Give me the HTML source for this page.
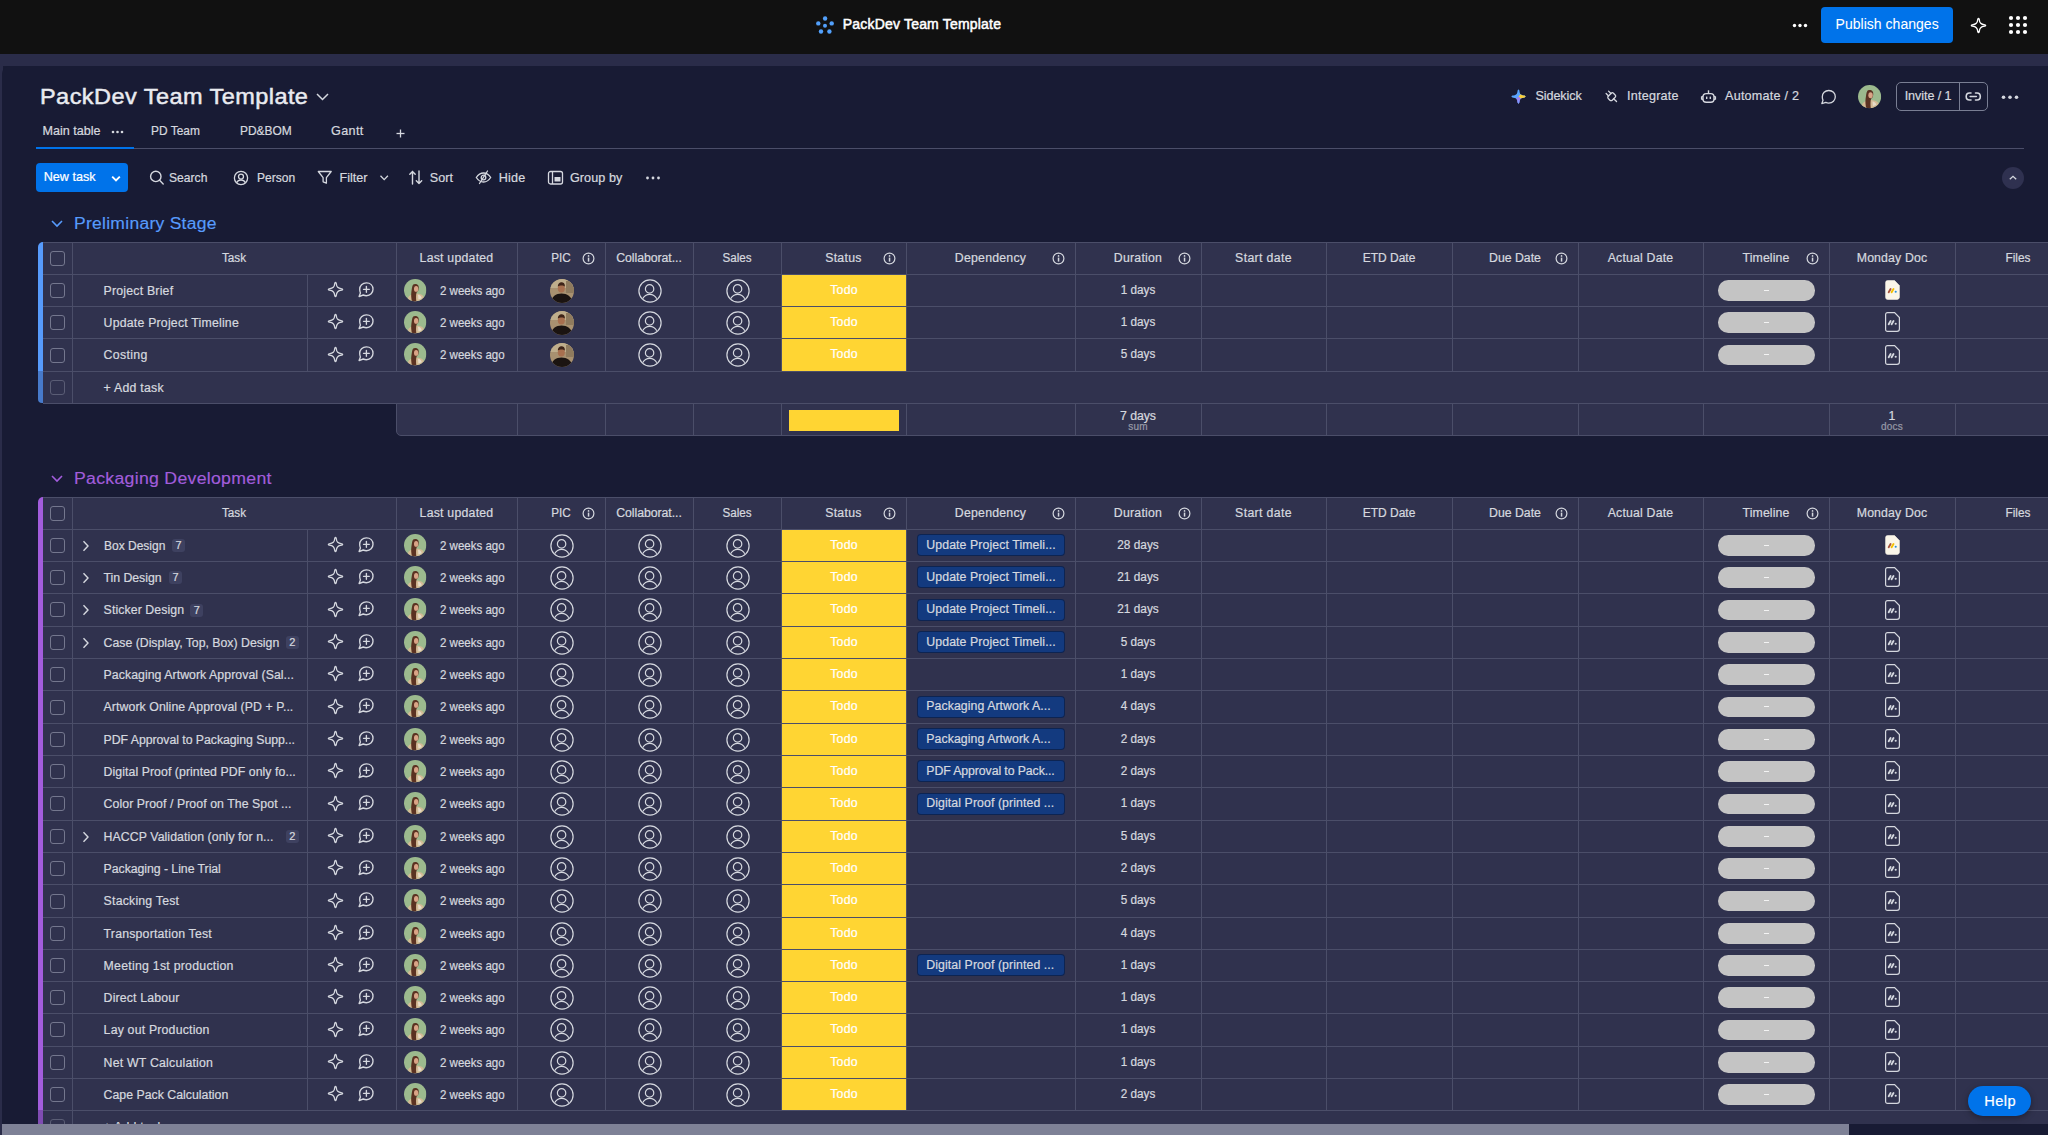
<!DOCTYPE html>
<html><head><meta charset="utf-8"><title>PackDev Team Template</title>
<style>
#root div{-webkit-text-stroke:0.22px currentColor;}
html,body{margin:0;padding:0;width:2048px;height:1135px;overflow:hidden;background:#181b34;font-family:"Liberation Sans", sans-serif;}
#root{position:relative;width:2048px;height:1135px;overflow:hidden;}
</style></head><body><div id="root">
<div style="position:absolute;left:0px;top:0px;width:2048px;height:54px;background:#111111;"></div>
<svg style="position:absolute;left:810px;top:10px;overflow:visible;" width="30" height="30" viewBox="0 0 30 30"><circle cx="15.100000000000023" cy="8.5" r="2.2" fill="#52a0fb"/><circle cx="8.299999999999955" cy="13.399999999999999" r="2.2" fill="#52a0fb"/><circle cx="21.700000000000045" cy="13.399999999999999" r="2.2" fill="#52a0fb"/><circle cx="15" cy="15.7" r="2.0" fill="#52a0fb"/><circle cx="11" cy="21.5" r="2.2" fill="#52a0fb"/><circle cx="19.399999999999977" cy="21.5" r="2.2" fill="#52a0fb"/></svg>
<div style="position:absolute;left:842.8px;top:17.25px;font-size:14px;line-height:14px;color:#ffffff;font-weight:400;letter-spacing:0.19px;white-space:nowrap;-webkit-text-stroke:0.5px #fff;">PackDev Team Template</div>
<svg style="position:absolute;left:1790px;top:20px;overflow:visible;" width="20" height="10" viewBox="0 0 20 10"><circle cx="4.5" cy="5.5" r="1.7" fill="#ffffff"/><circle cx="10" cy="5.5" r="1.7" fill="#ffffff"/><circle cx="15.5" cy="5.5" r="1.7" fill="#ffffff"/></svg>
<div style="position:absolute;left:1821px;top:7px;width:132px;height:36px;background:#0073ea;border-radius:4px;"></div>
<div style="position:absolute;left:1835.6px;top:17.15px;font-size:14px;line-height:14px;color:#ffffff;font-weight:400;letter-spacing:0.021px;white-space:nowrap;-webkit-text-stroke:0.05px #fff;">Publish changes</div>
<svg style="position:absolute;left:1969.5px;top:16.5px;overflow:visible;" width="17" height="17" viewBox="0 0 17 17"><path d="M6.30 6.30 C 7.30 5.40 7.65 3.70 7.80 2.20 Q 8.50 0.50 9.20 2.20 C 9.35 3.70 9.70 5.40 10.70 6.30 C 11.60 7.30 13.30 7.65 14.80 7.80 Q 16.50 8.50 14.80 9.20 C 13.30 9.35 11.60 9.70 10.70 10.70 C 9.70 11.60 9.35 13.30 9.20 14.80 Q 8.50 16.50 7.80 14.80 C 7.65 13.30 7.30 11.60 6.30 10.70 C 5.40 9.70 3.70 9.35 2.20 9.20 Q 0.50 8.50 2.20 7.80 C 3.70 7.65 5.40 7.30 6.30 6.30Z" fill="none" stroke="#fff" stroke-width="1.35" stroke-linejoin="round"/></svg>
<svg style="position:absolute;left:2007px;top:14px;overflow:visible;" width="22" height="22" viewBox="0 0 22 22"><circle cx="4" cy="4" r="2.1" fill="#fff"/><circle cx="4" cy="11" r="2.1" fill="#fff"/><circle cx="4" cy="18" r="2.1" fill="#fff"/><circle cx="11" cy="4" r="2.1" fill="#fff"/><circle cx="11" cy="11" r="2.1" fill="#fff"/><circle cx="11" cy="18" r="2.1" fill="#fff"/><circle cx="18" cy="4" r="2.1" fill="#fff"/><circle cx="18" cy="11" r="2.1" fill="#fff"/><circle cx="18" cy="18" r="2.1" fill="#fff"/></svg>
<div style="position:absolute;left:0px;top:54px;width:2048px;height:12px;background:#2a2c49;"></div>
<div style="position:absolute;left:0px;top:66px;width:3px;height:1069px;background:#2a2c49;"></div>
<div style="position:absolute;left:2px;top:66px;width:2046px;height:1069px;background:#181b34;border-top-left-radius:8px;"></div>
<div style="position:absolute;left:40px;top:85.72px;font-size:21.6px;line-height:21.6px;color:#e9ebf0;font-weight:400;letter-spacing:0.4px;white-space:nowrap;-webkit-text-stroke:0.45px #e9ebf0;transform:scaleX(1.0890);transform-origin:0 0;">PackDev Team Template</div>
<svg style="position:absolute;left:315px;top:92px;overflow:visible;" width="16" height="10" viewBox="0 0 16 10"><polyline points="2,2 7.5,7.5 13,2" fill="none" stroke="#d5d8df" stroke-width="1.5"/></svg>
<svg style="position:absolute;left:1510px;top:88.2px;overflow:visible;" width="17" height="17" viewBox="0 0 17 17"><defs><clipPath id="skc"><path d="M6.30 6.30 C 7.20 5.70 7.40 3.90 7.60 2.40 Q 8.50 0.50 9.40 2.40 C 9.60 3.90 9.80 5.70 10.70 6.30 C 11.30 7.20 13.10 7.40 14.60 7.60 Q 16.50 8.50 14.60 9.40 C 13.10 9.60 11.30 9.80 10.70 10.70 C 9.80 11.30 9.60 13.10 9.40 14.60 Q 8.50 16.50 7.60 14.60 C 7.40 13.10 7.20 11.30 6.30 10.70 C 5.70 9.80 3.90 9.60 2.40 9.40 Q 0.50 8.50 2.40 7.60 C 3.90 7.40 5.70 7.20 6.30 6.30Z"/></clipPath></defs><g clip-path="url(#skc)"><rect width="17" height="17" fill="#5aa5ff"/><path d="M8.5 8.5 L17 0 L17 17Z" fill="#f9cf3a"/><path d="M8.5 8.5 L17 17 L0 17Z" fill="#a878f2"/><path d="M8.5 8.5 L8.9 17 L7.2 17Z" fill="#6aa8ff"/></g></svg>
<div style="position:absolute;left:1535.4px;top:89.93px;font-size:12.6px;line-height:12.6px;color:#d5d8df;font-weight:400;letter-spacing:-0.071px;white-space:nowrap;">Sidekick</div>
<svg style="position:absolute;left:1604px;top:89px;overflow:visible;" width="15" height="15" viewBox="0 0 15 15"><g transform="rotate(-45 7.5 7.5)" fill="none" stroke="#d5d8df" stroke-width="1.3" stroke-linecap="round" stroke-linejoin="round"><rect x="3.8" y="5" width="7.4" height="5.6" rx="1.6"/><line x1="5.8" y1="5" x2="5.8" y2="1.6"/><line x1="9.2" y1="5" x2="9.2" y2="1.6"/><line x1="7.5" y1="10.6" x2="7.5" y2="14.6"/></g></svg>
<div style="position:absolute;left:1627px;top:89.93px;font-size:12.6px;line-height:12.6px;color:#d5d8df;font-weight:400;letter-spacing:0.225px;white-space:nowrap;">Integrate</div>
<svg style="position:absolute;left:1700px;top:89px;overflow:visible;" width="17" height="15" viewBox="0 0 17 15"><g fill="none" stroke="#d5d8df" stroke-width="1.4"><rect x="3" y="4.6" width="11" height="8.6" rx="3.2"/><line x1="8.5" y1="1.3" x2="8.5" y2="4.6"/><path d="M3 7.3 L1.6 7.9 L1.6 10 L3 10.6"/><path d="M14 7.3 L15.4 7.9 L15.4 10 L14 10.6"/></g><rect x="6" y="7.6" width="1.4" height="2.4" fill="#d5d8df"/><rect x="9.6" y="7.6" width="1.4" height="2.4" fill="#d5d8df"/></svg>
<div style="position:absolute;left:1725px;top:89.93px;font-size:12.6px;line-height:12.6px;color:#d5d8df;font-weight:400;letter-spacing:0.236px;white-space:nowrap;">Automate / 2</div>
<svg style="position:absolute;left:1820px;top:88.5px;overflow:visible;" width="17" height="16" viewBox="0 0 17 16"><path d="M8.8 1.5 C12.6 1.5 15.3 4.2 15.3 7.8 C15.3 11.4 12.6 14.1 8.8 14.1 C7.7 14.1 6.7 13.9 5.8 13.4 L1.8 14.6 L3 11.2 C2.5 10.2 2.3 9 2.3 7.8 C2.3 4.2 5 1.5 8.8 1.5Z" fill="none" stroke="#d5d8df" stroke-width="1.3" stroke-linejoin="round"/></svg>
<svg style="position:absolute;left:1857.9px;top:85.2px;overflow:visible;" width="23.2" height="23.2" viewBox="0 0 24 24"><defs><clipPath id="cw1"><circle cx="12" cy="12" r="12"/></clipPath></defs><g clip-path="url(#cw1)"><rect width="24" height="24" fill="#9cba8e"/><path d="M3 24 C3.5 19.5 6 17 9.5 16 C12 15.4 15.5 15.5 18.5 16.6 C21 17.6 22 20 22.5 24Z" fill="#d4bb95"/><path d="M15 17 C17 17 18.5 18.5 19 20.5 L15.5 22Z" fill="#e6dcc8"/><path d="M9.6 6.2 C10.6 4.9 13.8 4.8 15.2 6.8 C16.2 8.4 15.8 11 15.2 12.6 L13.6 14.2 C12.8 16.2 12.8 20.2 13.2 24 L8.4 24 C7.8 20.2 7.4 17 7.9 14 C8.4 11 8.5 8 9.6 6.2Z" fill="#5b3222"/><ellipse cx="13" cy="10.6" rx="2.3" ry="3.1" fill="#d9a486"/></g></svg>
<div style="position:absolute;left:1896px;top:82px;width:92px;height:29px;border:1px solid #797e93;border-radius:5px;box-sizing:border-box;"></div>
<div style="position:absolute;left:1959px;top:82px;width:1px;height:29px;background:#797e93;"></div>
<div style="position:absolute;left:1904.7px;top:89.63px;font-size:12.6px;line-height:12.6px;color:#d5d8df;font-weight:400;letter-spacing:-0.078px;white-space:nowrap;">Invite / 1</div>
<svg style="position:absolute;left:1965px;top:91px;overflow:visible;" width="17" height="12" viewBox="0 0 17 12"><g fill="none" stroke="#d5d8df" stroke-width="1.6" stroke-linecap="round"><path d="M6 2 L4.5 2 C2.5 2 1.2 3.6 1.2 5.5 C1.2 7.4 2.5 9 4.5 9 L6 9"/><path d="M10.5 2 L12 2 C14 2 15.3 3.6 15.3 5.5 C15.3 7.4 14 9 12 9 L10.5 9"/><line x1="5.2" y1="5.5" x2="11.3" y2="5.5"/></g></svg>
<svg style="position:absolute;left:2000px;top:92px;overflow:visible;" width="20" height="10" viewBox="0 0 20 10"><circle cx="3.5" cy="5.2" r="1.8" fill="#d5d8df"/><circle cx="10" cy="5.2" r="1.8" fill="#d5d8df"/><circle cx="16.5" cy="5.2" r="1.8" fill="#d5d8df"/></svg>
<div style="position:absolute;left:42.4px;top:125.03px;font-size:12.6px;line-height:12.6px;color:#d5d8df;font-weight:400;letter-spacing:0.0px;white-space:nowrap;">Main table</div>
<svg style="position:absolute;left:110px;top:128px;overflow:visible;" width="16" height="8" viewBox="0 0 16 8"><circle cx="3" cy="4" r="1.3" fill="#d5d8df"/><circle cx="7.5" cy="4" r="1.3" fill="#d5d8df"/><circle cx="12" cy="4" r="1.3" fill="#d5d8df"/></svg>
<div style="position:absolute;left:151px;top:125.03px;font-size:12.6px;line-height:12.6px;color:#d5d8df;font-weight:400;letter-spacing:0px;white-space:nowrap;transform:scaleX(0.9477);transform-origin:0 0;">PD Team</div>
<div style="position:absolute;left:239.5px;top:125.03px;font-size:12.6px;line-height:12.6px;color:#d5d8df;font-weight:400;letter-spacing:0px;white-space:nowrap;transform:scaleX(0.9487);transform-origin:0 0;">PD&amp;BOM</div>
<div style="position:absolute;left:331px;top:125.03px;font-size:12.6px;line-height:12.6px;color:#d5d8df;font-weight:400;letter-spacing:0.375px;white-space:nowrap;">Gantt</div>
<svg style="position:absolute;left:395px;top:128px;overflow:visible;" width="11" height="11" viewBox="0 0 11 11"><g stroke="#d5d8df" stroke-width="1.3"><line x1="5.5" y1="1.5" x2="5.5" y2="9.5"/><line x1="1.5" y1="5.5" x2="9.5" y2="5.5"/></g></svg>
<div style="position:absolute;left:36px;top:148px;width:1988px;height:1px;background:#4b4e69;"></div>
<div style="position:absolute;left:36px;top:147px;width:98px;height:2px;background:#0073ea;"></div>
<div style="position:absolute;left:36px;top:163px;width:91.5px;height:29px;background:#0073ea;border-radius:4px;"></div>
<div style="position:absolute;left:43.7px;top:170.73px;font-size:12.6px;line-height:12.6px;color:#ffffff;font-weight:400;letter-spacing:0.014px;white-space:nowrap;">New task</div>
<svg style="position:absolute;left:110px;top:173.6px;overflow:visible;" width="12" height="9" viewBox="0 0 12 9"><polyline points="2.2,2.6 6,6.4 9.8,2.6" fill="none" stroke="#fff" stroke-width="1.9"/></svg>
<svg style="position:absolute;left:149px;top:170px;overflow:visible;" width="16" height="15" viewBox="0 0 16 15"><g fill="none" stroke="#d5d8df" stroke-width="1.4" stroke-linecap="round"><circle cx="6.8" cy="6.4" r="5.2"/><line x1="10.6" y1="10.3" x2="14.2" y2="13.9"/></g></svg>
<div style="position:absolute;left:168.7px;top:171.73px;font-size:12.6px;line-height:12.6px;color:#d5d8df;font-weight:400;letter-spacing:0px;white-space:nowrap;transform:scaleX(0.9624);transform-origin:0 0;">Search</div>
<svg style="position:absolute;left:233px;top:170px;overflow:visible;" width="16" height="16" viewBox="0 0 16 16"><g fill="none" stroke="#d5d8df" stroke-width="1.3"><circle cx="8" cy="8" r="6.6"/><circle cx="8" cy="6.6" r="2.5"/><path d="M3.6 12.8 C4.6 10.8 6.2 10 8 10 C9.8 10 11.4 10.8 12.4 12.8"/></g></svg>
<div style="position:absolute;left:256.6px;top:171.73px;font-size:12.6px;line-height:12.6px;color:#d5d8df;font-weight:400;letter-spacing:0px;white-space:nowrap;transform:scaleX(0.9549);transform-origin:0 0;">Person</div>
<svg style="position:absolute;left:317px;top:170px;overflow:visible;" width="16" height="15" viewBox="0 0 16 15"><path d="M1.3 1.5 L14.2 1.5 L9.4 7.6 L9.4 13.2 L6.1 11.8 L6.1 7.6 Z" fill="none" stroke="#d5d8df" stroke-width="1.3" stroke-linejoin="round"/></svg>
<div style="position:absolute;left:339.5px;top:171.73px;font-size:12.6px;line-height:12.6px;color:#d5d8df;font-weight:400;letter-spacing:0.0px;white-space:nowrap;">Filter</div>
<svg style="position:absolute;left:379px;top:174px;overflow:visible;" width="11" height="8" viewBox="0 0 11 8"><polyline points="1.5,1.8 5.2,5.6 8.9,1.8" fill="none" stroke="#d5d8df" stroke-width="1.3"/></svg>
<svg style="position:absolute;left:409px;top:170px;overflow:visible;" width="14" height="15" viewBox="0 0 14 15"><g fill="none" stroke="#d5d8df" stroke-width="1.4" stroke-linecap="round" stroke-linejoin="round"><path d="M3.5 14 L3.5 1.5 M0.8 4.3 L3.5 1.5 L6.2 4.3"/><path d="M10 1 L10 13.5 M7.3 10.8 L10 13.5 L12.7 10.8"/></g></svg>
<div style="position:absolute;left:429.8px;top:171.73px;font-size:12.6px;line-height:12.6px;color:#d5d8df;font-weight:400;letter-spacing:0.033px;white-space:nowrap;">Sort</div>
<svg style="position:absolute;left:475px;top:170px;overflow:visible;" width="17" height="14" viewBox="0 0 17 14"><g fill="none" stroke="#d5d8df" stroke-width="1.3" stroke-linecap="round"><path d="M1.3 7.5 C3.2 4.6 5.8 3 8.5 3 C11.2 3 13.8 4.6 15.7 7.5 C13.8 10.4 11.2 12 8.5 12 C5.8 12 3.2 10.4 1.3 7.5Z"/><circle cx="8.5" cy="7.5" r="2.3"/><line x1="12.5" y1="1" x2="4.5" y2="13.5"/></g></svg>
<div style="position:absolute;left:498.8px;top:171.73px;font-size:12.6px;line-height:12.6px;color:#d5d8df;font-weight:400;letter-spacing:0.167px;white-space:nowrap;">Hide</div>
<svg style="position:absolute;left:547px;top:170px;overflow:visible;" width="17" height="15" viewBox="0 0 17 15"><g fill="none" stroke="#d5d8df" stroke-width="1.3"><rect x="1.5" y="1.5" width="14" height="12.5" rx="2"/><line x1="5.5" y1="1.5" x2="5.5" y2="14"/></g><rect x="7.5" y="7" width="6" height="4.5" fill="#d5d8df"/></svg>
<div style="position:absolute;left:569.9px;top:171.73px;font-size:12.6px;line-height:12.6px;color:#d5d8df;font-weight:400;letter-spacing:0.086px;white-space:nowrap;">Group by</div>
<svg style="position:absolute;left:644px;top:173px;overflow:visible;" width="18" height="10" viewBox="0 0 18 10"><circle cx="3.5" cy="5" r="1.4" fill="#d5d8df"/><circle cx="9" cy="5" r="1.4" fill="#d5d8df"/><circle cx="14.5" cy="5" r="1.4" fill="#d5d8df"/></svg>
<div style="position:absolute;left:2002px;top:167px;width:22px;height:22px;border-radius:50%;background:#2f3150;"></div>
<svg style="position:absolute;left:2007px;top:173.8px;overflow:visible;" width="12" height="8" viewBox="0 0 12 8"><polyline points="2.8,5.3 6,2.3 9.2,5.3" fill="none" stroke="#d5d8df" stroke-width="1.3"/></svg>
<svg style="position:absolute;left:50px;top:218.7px;overflow:visible;" width="14" height="9" viewBox="0 0 14 9"><polyline points="2,2 7,7 12,2" fill="none" stroke="#579bfc" stroke-width="1.6"/></svg>
<div style="position:absolute;left:74.3px;top:215.53px;font-size:15.8px;line-height:15.8px;color:#579bfc;font-weight:400;letter-spacing:0.25px;white-space:nowrap;-webkit-text-stroke:0.15px #579bfc;transform:scaleX(1.1072);transform-origin:0 0;">Preliminary Stage</div>
<div style="position:absolute;left:43px;top:242px;width:2005px;height:161px;background:#30324e;"></div>
<div style="position:absolute;left:38px;top:242px;width:5px;height:129px;background:#579bfc;border-top-left-radius:5px;"></div>
<div style="position:absolute;left:38px;top:371px;width:5px;height:32px;border-bottom-left-radius:4px;background:#579bfc;opacity:0.75;"></div>
<div style="position:absolute;left:43px;top:242px;width:2005px;height:1px;background:#4b4e69;"></div>
<div style="position:absolute;left:43px;top:274px;width:2005px;height:1px;background:#4b4e69;"></div>
<div style="position:absolute;left:43px;top:306px;width:2005px;height:1px;background:#4b4e69;"></div>
<div style="position:absolute;left:43px;top:338px;width:2005px;height:1px;background:#4b4e69;"></div>
<div style="position:absolute;left:43px;top:371px;width:2005px;height:1px;background:#4b4e69;"></div>
<div style="position:absolute;left:43px;top:403px;width:2005px;height:1px;background:#4b4e69;"></div>
<div style="position:absolute;left:72px;top:242px;width:1px;height:161px;background:#4b4e69;"></div>
<div style="position:absolute;left:396px;top:242px;width:1px;height:129px;background:#4b4e69;"></div>
<div style="position:absolute;left:517px;top:242px;width:1px;height:129px;background:#4b4e69;"></div>
<div style="position:absolute;left:605px;top:242px;width:1px;height:129px;background:#4b4e69;"></div>
<div style="position:absolute;left:693px;top:242px;width:1px;height:129px;background:#4b4e69;"></div>
<div style="position:absolute;left:781px;top:242px;width:1px;height:129px;background:#4b4e69;"></div>
<div style="position:absolute;left:906px;top:242px;width:1px;height:129px;background:#4b4e69;"></div>
<div style="position:absolute;left:1075px;top:242px;width:1px;height:129px;background:#4b4e69;"></div>
<div style="position:absolute;left:1201px;top:242px;width:1px;height:129px;background:#4b4e69;"></div>
<div style="position:absolute;left:1326px;top:242px;width:1px;height:129px;background:#4b4e69;"></div>
<div style="position:absolute;left:1452px;top:242px;width:1px;height:129px;background:#4b4e69;"></div>
<div style="position:absolute;left:1578px;top:242px;width:1px;height:129px;background:#4b4e69;"></div>
<div style="position:absolute;left:1703px;top:242px;width:1px;height:129px;background:#4b4e69;"></div>
<div style="position:absolute;left:1829px;top:242px;width:1px;height:129px;background:#4b4e69;"></div>
<div style="position:absolute;left:1955px;top:242px;width:1px;height:129px;background:#4b4e69;"></div>
<div style="position:absolute;left:307px;top:274px;width:1px;height:97px;background:#4b4e69;"></div>
<div style="position:absolute;left:50px;top:251px;width:15px;height:15px;border:1px solid #74778e;border-radius:3px;box-sizing:border-box;"></div>
<div style="position:absolute;left:72px;width:324px;top:251.59px;font-size:12.3px;line-height:12.3px;color:#d5d8df;font-weight:400;letter-spacing:0px;white-space:nowrap;text-align:center;transform:scaleX(0.9526);transform-origin:50% 0;">Task</div>
<div style="position:absolute;left:396px;width:121px;top:251.59px;font-size:12.3px;line-height:12.3px;color:#d5d8df;font-weight:400;letter-spacing:0.227px;white-space:nowrap;text-align:center;">Last updated</div>
<div style="position:absolute;left:517px;width:88px;top:251.59px;font-size:12.3px;line-height:12.3px;color:#d5d8df;font-weight:400;letter-spacing:0px;white-space:nowrap;text-align:center;transform:scaleX(0.9512);transform-origin:50% 0;">PIC</div>
<svg style="position:absolute;left:582.0px;top:251.8px;overflow:visible;" width="13" height="13" viewBox="0 0 13 13"><circle cx="6.5" cy="6.5" r="5.4" fill="none" stroke="#d5d8df" stroke-width="1.2"/><rect x="5.8" y="5.6" width="1.5" height="4" fill="#d5d8df"/><circle cx="6.55" cy="3.9" r="0.85" fill="#d5d8df"/></svg>
<div style="position:absolute;left:605px;width:88px;top:251.59px;font-size:12.3px;line-height:12.3px;color:#d5d8df;font-weight:400;letter-spacing:-0.05px;white-space:nowrap;text-align:center;">Collaborat...</div>
<div style="position:absolute;left:693px;width:88px;top:251.59px;font-size:12.3px;line-height:12.3px;color:#d5d8df;font-weight:400;letter-spacing:0px;white-space:nowrap;text-align:center;transform:scaleX(0.9481);transform-origin:50% 0;">Sales</div>
<div style="position:absolute;left:781px;width:125px;top:251.59px;font-size:12.3px;line-height:12.3px;color:#d5d8df;font-weight:400;letter-spacing:0.3px;white-space:nowrap;text-align:center;">Status</div>
<svg style="position:absolute;left:883.0px;top:251.8px;overflow:visible;" width="13" height="13" viewBox="0 0 13 13"><circle cx="6.5" cy="6.5" r="5.4" fill="none" stroke="#d5d8df" stroke-width="1.2"/><rect x="5.8" y="5.6" width="1.5" height="4" fill="#d5d8df"/><circle cx="6.55" cy="3.9" r="0.85" fill="#d5d8df"/></svg>
<div style="position:absolute;left:906px;width:169px;top:251.59px;font-size:12.3px;line-height:12.3px;color:#d5d8df;font-weight:400;letter-spacing:0.233px;white-space:nowrap;text-align:center;">Dependency</div>
<svg style="position:absolute;left:1052.0px;top:251.8px;overflow:visible;" width="13" height="13" viewBox="0 0 13 13"><circle cx="6.5" cy="6.5" r="5.4" fill="none" stroke="#d5d8df" stroke-width="1.2"/><rect x="5.8" y="5.6" width="1.5" height="4" fill="#d5d8df"/><circle cx="6.55" cy="3.9" r="0.85" fill="#d5d8df"/></svg>
<div style="position:absolute;left:1075px;width:126px;top:251.59px;font-size:12.3px;line-height:12.3px;color:#d5d8df;font-weight:400;letter-spacing:0.229px;white-space:nowrap;text-align:center;">Duration</div>
<svg style="position:absolute;left:1178.0px;top:251.8px;overflow:visible;" width="13" height="13" viewBox="0 0 13 13"><circle cx="6.5" cy="6.5" r="5.4" fill="none" stroke="#d5d8df" stroke-width="1.2"/><rect x="5.8" y="5.6" width="1.5" height="4" fill="#d5d8df"/><circle cx="6.55" cy="3.9" r="0.85" fill="#d5d8df"/></svg>
<div style="position:absolute;left:1201px;width:125px;top:251.59px;font-size:12.3px;line-height:12.3px;color:#d5d8df;font-weight:400;letter-spacing:0.344px;white-space:nowrap;text-align:center;">Start date</div>
<div style="position:absolute;left:1326px;width:126px;top:251.59px;font-size:12.3px;line-height:12.3px;color:#d5d8df;font-weight:400;letter-spacing:0px;white-space:nowrap;text-align:center;transform:scaleX(0.9759);transform-origin:50% 0;">ETD Date</div>
<div style="position:absolute;left:1452px;width:126px;top:251.59px;font-size:12.3px;line-height:12.3px;color:#d5d8df;font-weight:400;letter-spacing:-0.014px;white-space:nowrap;text-align:center;">Due Date</div>
<svg style="position:absolute;left:1555.0px;top:251.8px;overflow:visible;" width="13" height="13" viewBox="0 0 13 13"><circle cx="6.5" cy="6.5" r="5.4" fill="none" stroke="#d5d8df" stroke-width="1.2"/><rect x="5.8" y="5.6" width="1.5" height="4" fill="#d5d8df"/><circle cx="6.55" cy="3.9" r="0.85" fill="#d5d8df"/></svg>
<div style="position:absolute;left:1578px;width:125px;top:251.59px;font-size:12.3px;line-height:12.3px;color:#d5d8df;font-weight:400;letter-spacing:0.19px;white-space:nowrap;text-align:center;">Actual Date</div>
<div style="position:absolute;left:1703px;width:126px;top:251.59px;font-size:12.3px;line-height:12.3px;color:#d5d8df;font-weight:400;letter-spacing:0.1px;white-space:nowrap;text-align:center;">Timeline</div>
<svg style="position:absolute;left:1806.0px;top:251.8px;overflow:visible;" width="13" height="13" viewBox="0 0 13 13"><circle cx="6.5" cy="6.5" r="5.4" fill="none" stroke="#d5d8df" stroke-width="1.2"/><rect x="5.8" y="5.6" width="1.5" height="4" fill="#d5d8df"/><circle cx="6.55" cy="3.9" r="0.85" fill="#d5d8df"/></svg>
<div style="position:absolute;left:1829px;width:126px;top:251.59px;font-size:12.3px;line-height:12.3px;color:#d5d8df;font-weight:400;letter-spacing:0.144px;white-space:nowrap;text-align:center;">Monday Doc</div>
<div style="position:absolute;left:1955px;width:126px;top:251.59px;font-size:12.3px;line-height:12.3px;color:#d5d8df;font-weight:400;letter-spacing:0px;white-space:nowrap;text-align:center;transform:scaleX(0.9615);transform-origin:50% 0;">Files</div>
<div style="position:absolute;left:50px;top:283px;width:15px;height:15px;border:1px solid #74778e;border-radius:3px;box-sizing:border-box;"></div>
<div style="position:absolute;left:103.6px;top:285.39px;font-size:12.3px;line-height:12.3px;color:#d5d8df;font-weight:400;letter-spacing:0.208px;white-space:nowrap;">Project Brief</div>
<svg style="position:absolute;left:327.0px;top:281.1px;overflow:visible;" width="17" height="17" viewBox="0 0 17 17"><path d="M6.30 6.30 C 7.30 5.40 7.65 3.70 7.80 2.20 Q 8.50 0.50 9.20 2.20 C 9.35 3.70 9.70 5.40 10.70 6.30 C 11.60 7.30 13.30 7.65 14.80 7.80 Q 16.50 8.50 14.80 9.20 C 13.30 9.35 11.60 9.70 10.70 10.70 C 9.70 11.60 9.35 13.30 9.20 14.80 Q 8.50 16.50 7.80 14.80 C 7.65 13.30 7.30 11.60 6.30 10.70 C 5.40 9.70 3.70 9.35 2.20 9.20 Q 0.50 8.50 2.20 7.80 C 3.70 7.65 5.40 7.30 6.30 6.30Z" fill="none" stroke="#d5d8df" stroke-width="1.3" stroke-linejoin="round"/></svg>
<svg style="position:absolute;left:357.7px;top:281.9px;overflow:visible;" width="16" height="16" viewBox="0 0 16 16"><g fill="none" stroke="#d5d8df" stroke-width="1.35" stroke-linecap="round" stroke-linejoin="round"><path d="M8.4 0.9 C12.4 0.9 15 3.7 15 7.3 C15 10.9 12.3 13.7 8.4 13.7 C7.2 13.7 6.2 13.4 5.2 13 L1.1 14.6 L2.4 11 C1.9 9.9 1.7 8.6 1.7 7.3 C1.7 3.7 4.4 0.9 8.4 0.9Z"/><line x1="8.4" y1="4.4" x2="8.4" y2="10.2"/><line x1="5.5" y1="7.3" x2="11.3" y2="7.3"/></g></svg>
<svg style="position:absolute;left:403.8px;top:278.8px;overflow:visible;" width="22.4" height="22.4" viewBox="0 0 24 24"><defs><clipPath id="cw2"><circle cx="12" cy="12" r="12"/></clipPath></defs><g clip-path="url(#cw2)"><rect width="24" height="24" fill="#9cba8e"/><path d="M3 24 C3.5 19.5 6 17 9.5 16 C12 15.4 15.5 15.5 18.5 16.6 C21 17.6 22 20 22.5 24Z" fill="#d4bb95"/><path d="M15 17 C17 17 18.5 18.5 19 20.5 L15.5 22Z" fill="#e6dcc8"/><path d="M9.6 6.2 C10.6 4.9 13.8 4.8 15.2 6.8 C16.2 8.4 15.8 11 15.2 12.6 L13.6 14.2 C12.8 16.2 12.8 20.2 13.2 24 L8.4 24 C7.8 20.2 7.4 17 7.9 14 C8.4 11 8.5 8 9.6 6.2Z" fill="#5b3222"/><ellipse cx="13" cy="10.6" rx="2.3" ry="3.1" fill="#d9a486"/></g></svg>
<div style="position:absolute;left:440.3px;top:284.70px;font-size:12.4px;line-height:12.4px;color:#d5d8df;font-weight:400;letter-spacing:0px;white-space:nowrap;transform:scaleX(0.9296);transform-origin:0 0;">2 weeks ago</div>
<svg style="position:absolute;left:549.9px;top:278.5px;overflow:visible;" width="24" height="24" viewBox="0 0 24 24"><defs><clipPath id="cm3"><circle cx="12" cy="12" r="12"/></clipPath></defs><g clip-path="url(#cm3)"><rect width="24" height="24" fill="#a89170"/><rect x="0" y="0" width="24" height="9" fill="#bfae8c"/><rect x="16" y="2" width="8" height="12" fill="#8f7b5e"/><path d="M0.5 24 C1.5 17.5 6 14.5 11.5 14.5 C17 14.5 21.5 17.5 23.5 24Z" fill="#1b1411"/><ellipse cx="11.3" cy="9.2" rx="3.5" ry="4.4" fill="#a8704f"/><path d="M7.8 7.6 C8 4.2 9.8 3.2 11.6 3.2 C13.6 3.2 15 4.4 14.9 7.6 C13.8 6.2 9.8 6 7.8 7.6Z" fill="#3e2418"/></g></svg>
<svg style="position:absolute;left:637.7px;top:278.5px;overflow:visible;" width="24" height="24" viewBox="0 0 24 24"><g fill="none" stroke="#d5d8df" stroke-width="1.2"><circle cx="12" cy="12" r="11.1"/><circle cx="11.6" cy="9.9" r="4.2"/><path d="M4.6 19.7 C6.2 16.8 8.8 15.3 11.7 15.3 C14.6 15.3 17.2 16.8 18.8 19.7"/></g></svg>
<svg style="position:absolute;left:725.6px;top:278.5px;overflow:visible;" width="24" height="24" viewBox="0 0 24 24"><g fill="none" stroke="#d5d8df" stroke-width="1.2"><circle cx="12" cy="12" r="11.1"/><circle cx="11.6" cy="9.9" r="4.2"/><path d="M4.6 19.7 C6.2 16.8 8.8 15.3 11.7 15.3 C14.6 15.3 17.2 16.8 18.8 19.7"/></g></svg>
<div style="position:absolute;left:782px;top:275px;width:124px;height:31px;background:#ffd533;"></div>
<div style="position:absolute;left:782px;width:124px;top:284.19px;font-size:12.3px;line-height:12.3px;color:#ffffff;font-weight:400;letter-spacing:0.267px;white-space:nowrap;text-align:center;">Todo</div>
<div style="position:absolute;left:1075px;width:126px;top:284.19px;font-size:12.3px;line-height:12.3px;color:#d5d8df;font-weight:400;letter-spacing:0px;white-space:nowrap;text-align:center;transform:scaleX(0.9530);transform-origin:50% 0;">1 days</div>
<div style="position:absolute;left:1718.4px;top:280.3px;width:96.6px;height:20.5px;border-radius:10.25px;background:#c4c4c4;"></div>
<div style="position:absolute;left:1764px;top:290px;width:4.5px;height:1.2px;background:#f4f4f4;"></div>
<svg style="position:absolute;left:1884.7px;top:280.0px;overflow:visible;" width="15" height="20" viewBox="0 0 15 20"><path d="M2.6 0.6 L9.6 0.6 L14.4 5.6 L14.4 17 C14.4 18.5 13.5 19.4 12 19.4 L2.6 19.4 C1.3 19.4 0.6 18.6 0.6 17.2 L0.6 2.8 C0.6 1.4 1.3 0.6 2.6 0.6Z" fill="#fbf6e9" stroke="#fbf6e9" stroke-width="0.6"/><g stroke-width="1.9" stroke-linecap="round"><line x1="3.7" y1="12.2" x2="5.6" y2="9" stroke="#a8563f"/><line x1="6.6" y1="12.2" x2="8.5" y2="9" stroke="#f5c000"/></g><circle cx="10.7" cy="11.8" r="1.05" fill="#2a8fd8"/></svg>
<div style="position:absolute;left:50px;top:315px;width:15px;height:15px;border:1px solid #74778e;border-radius:3px;box-sizing:border-box;"></div>
<div style="position:absolute;left:103.6px;top:317.39px;font-size:12.3px;line-height:12.3px;color:#d5d8df;font-weight:400;letter-spacing:0.209px;white-space:nowrap;">Update Project Timeline</div>
<svg style="position:absolute;left:327.0px;top:313.1px;overflow:visible;" width="17" height="17" viewBox="0 0 17 17"><path d="M6.30 6.30 C 7.30 5.40 7.65 3.70 7.80 2.20 Q 8.50 0.50 9.20 2.20 C 9.35 3.70 9.70 5.40 10.70 6.30 C 11.60 7.30 13.30 7.65 14.80 7.80 Q 16.50 8.50 14.80 9.20 C 13.30 9.35 11.60 9.70 10.70 10.70 C 9.70 11.60 9.35 13.30 9.20 14.80 Q 8.50 16.50 7.80 14.80 C 7.65 13.30 7.30 11.60 6.30 10.70 C 5.40 9.70 3.70 9.35 2.20 9.20 Q 0.50 8.50 2.20 7.80 C 3.70 7.65 5.40 7.30 6.30 6.30Z" fill="none" stroke="#d5d8df" stroke-width="1.3" stroke-linejoin="round"/></svg>
<svg style="position:absolute;left:357.7px;top:313.9px;overflow:visible;" width="16" height="16" viewBox="0 0 16 16"><g fill="none" stroke="#d5d8df" stroke-width="1.35" stroke-linecap="round" stroke-linejoin="round"><path d="M8.4 0.9 C12.4 0.9 15 3.7 15 7.3 C15 10.9 12.3 13.7 8.4 13.7 C7.2 13.7 6.2 13.4 5.2 13 L1.1 14.6 L2.4 11 C1.9 9.9 1.7 8.6 1.7 7.3 C1.7 3.7 4.4 0.9 8.4 0.9Z"/><line x1="8.4" y1="4.4" x2="8.4" y2="10.2"/><line x1="5.5" y1="7.3" x2="11.3" y2="7.3"/></g></svg>
<svg style="position:absolute;left:403.8px;top:310.8px;overflow:visible;" width="22.4" height="22.4" viewBox="0 0 24 24"><defs><clipPath id="cw4"><circle cx="12" cy="12" r="12"/></clipPath></defs><g clip-path="url(#cw4)"><rect width="24" height="24" fill="#9cba8e"/><path d="M3 24 C3.5 19.5 6 17 9.5 16 C12 15.4 15.5 15.5 18.5 16.6 C21 17.6 22 20 22.5 24Z" fill="#d4bb95"/><path d="M15 17 C17 17 18.5 18.5 19 20.5 L15.5 22Z" fill="#e6dcc8"/><path d="M9.6 6.2 C10.6 4.9 13.8 4.8 15.2 6.8 C16.2 8.4 15.8 11 15.2 12.6 L13.6 14.2 C12.8 16.2 12.8 20.2 13.2 24 L8.4 24 C7.8 20.2 7.4 17 7.9 14 C8.4 11 8.5 8 9.6 6.2Z" fill="#5b3222"/><ellipse cx="13" cy="10.6" rx="2.3" ry="3.1" fill="#d9a486"/></g></svg>
<div style="position:absolute;left:440.3px;top:316.70px;font-size:12.4px;line-height:12.4px;color:#d5d8df;font-weight:400;letter-spacing:0px;white-space:nowrap;transform:scaleX(0.9296);transform-origin:0 0;">2 weeks ago</div>
<svg style="position:absolute;left:549.9px;top:310.5px;overflow:visible;" width="24" height="24" viewBox="0 0 24 24"><defs><clipPath id="cm5"><circle cx="12" cy="12" r="12"/></clipPath></defs><g clip-path="url(#cm5)"><rect width="24" height="24" fill="#a89170"/><rect x="0" y="0" width="24" height="9" fill="#bfae8c"/><rect x="16" y="2" width="8" height="12" fill="#8f7b5e"/><path d="M0.5 24 C1.5 17.5 6 14.5 11.5 14.5 C17 14.5 21.5 17.5 23.5 24Z" fill="#1b1411"/><ellipse cx="11.3" cy="9.2" rx="3.5" ry="4.4" fill="#a8704f"/><path d="M7.8 7.6 C8 4.2 9.8 3.2 11.6 3.2 C13.6 3.2 15 4.4 14.9 7.6 C13.8 6.2 9.8 6 7.8 7.6Z" fill="#3e2418"/></g></svg>
<svg style="position:absolute;left:637.7px;top:310.5px;overflow:visible;" width="24" height="24" viewBox="0 0 24 24"><g fill="none" stroke="#d5d8df" stroke-width="1.2"><circle cx="12" cy="12" r="11.1"/><circle cx="11.6" cy="9.9" r="4.2"/><path d="M4.6 19.7 C6.2 16.8 8.8 15.3 11.7 15.3 C14.6 15.3 17.2 16.8 18.8 19.7"/></g></svg>
<svg style="position:absolute;left:725.6px;top:310.5px;overflow:visible;" width="24" height="24" viewBox="0 0 24 24"><g fill="none" stroke="#d5d8df" stroke-width="1.2"><circle cx="12" cy="12" r="11.1"/><circle cx="11.6" cy="9.9" r="4.2"/><path d="M4.6 19.7 C6.2 16.8 8.8 15.3 11.7 15.3 C14.6 15.3 17.2 16.8 18.8 19.7"/></g></svg>
<div style="position:absolute;left:782px;top:307px;width:124px;height:31px;background:#ffd533;"></div>
<div style="position:absolute;left:782px;width:124px;top:316.19px;font-size:12.3px;line-height:12.3px;color:#ffffff;font-weight:400;letter-spacing:0.267px;white-space:nowrap;text-align:center;">Todo</div>
<div style="position:absolute;left:1075px;width:126px;top:316.19px;font-size:12.3px;line-height:12.3px;color:#d5d8df;font-weight:400;letter-spacing:0px;white-space:nowrap;text-align:center;transform:scaleX(0.9530);transform-origin:50% 0;">1 days</div>
<div style="position:absolute;left:1718.4px;top:312.3px;width:96.6px;height:20.5px;border-radius:10.25px;background:#c4c4c4;"></div>
<div style="position:absolute;left:1764px;top:322px;width:4.5px;height:1.2px;background:#f4f4f4;"></div>
<svg style="position:absolute;left:1884.7px;top:312.0px;overflow:visible;" width="15" height="20" viewBox="0 0 15 20"><path d="M2.6 0.6 L9.6 0.6 L14.4 5.6 L14.4 17 C14.4 18.5 13.5 19.4 12 19.4 L2.6 19.4 C1.3 19.4 0.6 18.6 0.6 17.2 L0.6 2.8 C0.6 1.4 1.3 0.6 2.6 0.6Z" fill="none" stroke="#d5d8df" stroke-width="1.2"/><g stroke="#d5d8df" stroke-width="1.9" stroke-linecap="round"><line x1="3.7" y1="12.2" x2="5.6" y2="9"/><line x1="6.6" y1="12.2" x2="8.5" y2="9"/></g><circle cx="10.7" cy="11.8" r="1.05" fill="#d5d8df"/></svg>
<div style="position:absolute;left:50px;top:348px;width:15px;height:15px;border:1px solid #74778e;border-radius:3px;box-sizing:border-box;"></div>
<div style="position:absolute;left:103.6px;top:349.39px;font-size:12.3px;line-height:12.3px;color:#d5d8df;font-weight:400;letter-spacing:0.333px;white-space:nowrap;">Costing</div>
<svg style="position:absolute;left:327.0px;top:345.6px;overflow:visible;" width="17" height="17" viewBox="0 0 17 17"><path d="M6.30 6.30 C 7.30 5.40 7.65 3.70 7.80 2.20 Q 8.50 0.50 9.20 2.20 C 9.35 3.70 9.70 5.40 10.70 6.30 C 11.60 7.30 13.30 7.65 14.80 7.80 Q 16.50 8.50 14.80 9.20 C 13.30 9.35 11.60 9.70 10.70 10.70 C 9.70 11.60 9.35 13.30 9.20 14.80 Q 8.50 16.50 7.80 14.80 C 7.65 13.30 7.30 11.60 6.30 10.70 C 5.40 9.70 3.70 9.35 2.20 9.20 Q 0.50 8.50 2.20 7.80 C 3.70 7.65 5.40 7.30 6.30 6.30Z" fill="none" stroke="#d5d8df" stroke-width="1.3" stroke-linejoin="round"/></svg>
<svg style="position:absolute;left:357.7px;top:346.4px;overflow:visible;" width="16" height="16" viewBox="0 0 16 16"><g fill="none" stroke="#d5d8df" stroke-width="1.35" stroke-linecap="round" stroke-linejoin="round"><path d="M8.4 0.9 C12.4 0.9 15 3.7 15 7.3 C15 10.9 12.3 13.7 8.4 13.7 C7.2 13.7 6.2 13.4 5.2 13 L1.1 14.6 L2.4 11 C1.9 9.9 1.7 8.6 1.7 7.3 C1.7 3.7 4.4 0.9 8.4 0.9Z"/><line x1="8.4" y1="4.4" x2="8.4" y2="10.2"/><line x1="5.5" y1="7.3" x2="11.3" y2="7.3"/></g></svg>
<svg style="position:absolute;left:403.8px;top:343.3px;overflow:visible;" width="22.4" height="22.4" viewBox="0 0 24 24"><defs><clipPath id="cw6"><circle cx="12" cy="12" r="12"/></clipPath></defs><g clip-path="url(#cw6)"><rect width="24" height="24" fill="#9cba8e"/><path d="M3 24 C3.5 19.5 6 17 9.5 16 C12 15.4 15.5 15.5 18.5 16.6 C21 17.6 22 20 22.5 24Z" fill="#d4bb95"/><path d="M15 17 C17 17 18.5 18.5 19 20.5 L15.5 22Z" fill="#e6dcc8"/><path d="M9.6 6.2 C10.6 4.9 13.8 4.8 15.2 6.8 C16.2 8.4 15.8 11 15.2 12.6 L13.6 14.2 C12.8 16.2 12.8 20.2 13.2 24 L8.4 24 C7.8 20.2 7.4 17 7.9 14 C8.4 11 8.5 8 9.6 6.2Z" fill="#5b3222"/><ellipse cx="13" cy="10.6" rx="2.3" ry="3.1" fill="#d9a486"/></g></svg>
<div style="position:absolute;left:440.3px;top:348.70px;font-size:12.4px;line-height:12.4px;color:#d5d8df;font-weight:400;letter-spacing:0px;white-space:nowrap;transform:scaleX(0.9296);transform-origin:0 0;">2 weeks ago</div>
<svg style="position:absolute;left:549.9px;top:343.0px;overflow:visible;" width="24" height="24" viewBox="0 0 24 24"><defs><clipPath id="cm7"><circle cx="12" cy="12" r="12"/></clipPath></defs><g clip-path="url(#cm7)"><rect width="24" height="24" fill="#a89170"/><rect x="0" y="0" width="24" height="9" fill="#bfae8c"/><rect x="16" y="2" width="8" height="12" fill="#8f7b5e"/><path d="M0.5 24 C1.5 17.5 6 14.5 11.5 14.5 C17 14.5 21.5 17.5 23.5 24Z" fill="#1b1411"/><ellipse cx="11.3" cy="9.2" rx="3.5" ry="4.4" fill="#a8704f"/><path d="M7.8 7.6 C8 4.2 9.8 3.2 11.6 3.2 C13.6 3.2 15 4.4 14.9 7.6 C13.8 6.2 9.8 6 7.8 7.6Z" fill="#3e2418"/></g></svg>
<svg style="position:absolute;left:637.7px;top:343.0px;overflow:visible;" width="24" height="24" viewBox="0 0 24 24"><g fill="none" stroke="#d5d8df" stroke-width="1.2"><circle cx="12" cy="12" r="11.1"/><circle cx="11.6" cy="9.9" r="4.2"/><path d="M4.6 19.7 C6.2 16.8 8.8 15.3 11.7 15.3 C14.6 15.3 17.2 16.8 18.8 19.7"/></g></svg>
<svg style="position:absolute;left:725.6px;top:343.0px;overflow:visible;" width="24" height="24" viewBox="0 0 24 24"><g fill="none" stroke="#d5d8df" stroke-width="1.2"><circle cx="12" cy="12" r="11.1"/><circle cx="11.6" cy="9.9" r="4.2"/><path d="M4.6 19.7 C6.2 16.8 8.8 15.3 11.7 15.3 C14.6 15.3 17.2 16.8 18.8 19.7"/></g></svg>
<div style="position:absolute;left:782px;top:339px;width:124px;height:32px;background:#ffd533;"></div>
<div style="position:absolute;left:782px;width:124px;top:348.19px;font-size:12.3px;line-height:12.3px;color:#ffffff;font-weight:400;letter-spacing:0.267px;white-space:nowrap;text-align:center;">Todo</div>
<div style="position:absolute;left:1075px;width:126px;top:348.19px;font-size:12.3px;line-height:12.3px;color:#d5d8df;font-weight:400;letter-spacing:0px;white-space:nowrap;text-align:center;transform:scaleX(0.9530);transform-origin:50% 0;">5 days</div>
<div style="position:absolute;left:1718.4px;top:344.8px;width:96.6px;height:20.5px;border-radius:10.25px;background:#c4c4c4;"></div>
<div style="position:absolute;left:1764px;top:354px;width:4.5px;height:1.2px;background:#f4f4f4;"></div>
<svg style="position:absolute;left:1884.7px;top:344.5px;overflow:visible;" width="15" height="20" viewBox="0 0 15 20"><path d="M2.6 0.6 L9.6 0.6 L14.4 5.6 L14.4 17 C14.4 18.5 13.5 19.4 12 19.4 L2.6 19.4 C1.3 19.4 0.6 18.6 0.6 17.2 L0.6 2.8 C0.6 1.4 1.3 0.6 2.6 0.6Z" fill="none" stroke="#d5d8df" stroke-width="1.2"/><g stroke="#d5d8df" stroke-width="1.9" stroke-linecap="round"><line x1="3.7" y1="12.2" x2="5.6" y2="9"/><line x1="6.6" y1="12.2" x2="8.5" y2="9"/></g><circle cx="10.7" cy="11.8" r="1.05" fill="#d5d8df"/></svg>
<div style="position:absolute;left:50px;top:380px;width:15px;height:15px;border:1px solid #5a5d75;border-radius:3px;box-sizing:border-box;"></div>
<div style="position:absolute;left:103.6px;top:381.59px;font-size:12.3px;line-height:12.3px;color:#d5d8df;font-weight:400;letter-spacing:0.244px;white-space:nowrap;">+ Add task</div>
<div style="position:absolute;left:396px;top:403px;width:1700px;height:33px;background:#30324e;border:1px solid #4b4e69;border-bottom-left-radius:5px;box-sizing:border-box;"></div>
<div style="position:absolute;left:517px;top:403px;width:1px;height:32px;background:#4b4e69;"></div>
<div style="position:absolute;left:605px;top:403px;width:1px;height:32px;background:#4b4e69;"></div>
<div style="position:absolute;left:693px;top:403px;width:1px;height:32px;background:#4b4e69;"></div>
<div style="position:absolute;left:781px;top:403px;width:1px;height:32px;background:#4b4e69;"></div>
<div style="position:absolute;left:906px;top:403px;width:1px;height:32px;background:#4b4e69;"></div>
<div style="position:absolute;left:1075px;top:403px;width:1px;height:32px;background:#4b4e69;"></div>
<div style="position:absolute;left:1201px;top:403px;width:1px;height:32px;background:#4b4e69;"></div>
<div style="position:absolute;left:1326px;top:403px;width:1px;height:32px;background:#4b4e69;"></div>
<div style="position:absolute;left:1452px;top:403px;width:1px;height:32px;background:#4b4e69;"></div>
<div style="position:absolute;left:1578px;top:403px;width:1px;height:32px;background:#4b4e69;"></div>
<div style="position:absolute;left:1703px;top:403px;width:1px;height:32px;background:#4b4e69;"></div>
<div style="position:absolute;left:1829px;top:403px;width:1px;height:32px;background:#4b4e69;"></div>
<div style="position:absolute;left:1955px;top:403px;width:1px;height:32px;background:#4b4e69;"></div>
<div style="position:absolute;left:789px;top:409.5px;width:110px;height:21px;background:#ffd533;"></div>
<div style="position:absolute;left:1075px;width:126px;top:409.99px;font-size:12.3px;line-height:12.3px;color:#d5d8df;font-weight:400;letter-spacing:-0.06px;white-space:nowrap;text-align:center;">7 days</div>
<div style="position:absolute;left:1075px;width:126px;top:422.14px;font-size:10px;line-height:10px;color:#9699a6;font-weight:400;letter-spacing:0.2px;white-space:nowrap;text-align:center;">sum</div>
<div style="position:absolute;left:1829px;width:126px;top:409.99px;font-size:12.3px;line-height:12.3px;color:#d5d8df;font-weight:400;letter-spacing:0px;white-space:nowrap;text-align:center;">1</div>
<div style="position:absolute;left:1829px;width:126px;top:422.14px;font-size:10px;line-height:10px;color:#9699a6;font-weight:400;letter-spacing:0.2px;white-space:nowrap;text-align:center;">docs</div>
<svg style="position:absolute;left:50px;top:473.7px;overflow:visible;" width="14" height="9" viewBox="0 0 14 9"><polyline points="2,2 7,7 12,2" fill="none" stroke="#a25ddc" stroke-width="1.6"/></svg>
<div style="position:absolute;left:74.3px;top:470.53px;font-size:15.8px;line-height:15.8px;color:#a25ddc;font-weight:400;letter-spacing:0.25px;white-space:nowrap;-webkit-text-stroke:0.15px #a25ddc;transform:scaleX(1.1202);transform-origin:0 0;">Packaging Development</div>
<div style="position:absolute;left:43px;top:497px;width:2005px;height:646px;background:#30324e;"></div>
<div style="position:absolute;left:38px;top:497px;width:5px;height:613px;background:#a25ddc;border-top-left-radius:5px;"></div>
<div style="position:absolute;left:38px;top:1110px;width:5px;height:33px;border-bottom-left-radius:4px;background:#a25ddc;opacity:0.75;"></div>
<div style="position:absolute;left:43px;top:497px;width:2005px;height:1px;background:#4b4e69;"></div>
<div style="position:absolute;left:43px;top:529px;width:2005px;height:1px;background:#4b4e69;"></div>
<div style="position:absolute;left:43px;top:561px;width:2005px;height:1px;background:#4b4e69;"></div>
<div style="position:absolute;left:43px;top:593px;width:2005px;height:1px;background:#4b4e69;"></div>
<div style="position:absolute;left:43px;top:626px;width:2005px;height:1px;background:#4b4e69;"></div>
<div style="position:absolute;left:43px;top:658px;width:2005px;height:1px;background:#4b4e69;"></div>
<div style="position:absolute;left:43px;top:690px;width:2005px;height:1px;background:#4b4e69;"></div>
<div style="position:absolute;left:43px;top:723px;width:2005px;height:1px;background:#4b4e69;"></div>
<div style="position:absolute;left:43px;top:755px;width:2005px;height:1px;background:#4b4e69;"></div>
<div style="position:absolute;left:43px;top:787px;width:2005px;height:1px;background:#4b4e69;"></div>
<div style="position:absolute;left:43px;top:820px;width:2005px;height:1px;background:#4b4e69;"></div>
<div style="position:absolute;left:43px;top:852px;width:2005px;height:1px;background:#4b4e69;"></div>
<div style="position:absolute;left:43px;top:884px;width:2005px;height:1px;background:#4b4e69;"></div>
<div style="position:absolute;left:43px;top:917px;width:2005px;height:1px;background:#4b4e69;"></div>
<div style="position:absolute;left:43px;top:949px;width:2005px;height:1px;background:#4b4e69;"></div>
<div style="position:absolute;left:43px;top:981px;width:2005px;height:1px;background:#4b4e69;"></div>
<div style="position:absolute;left:43px;top:1013px;width:2005px;height:1px;background:#4b4e69;"></div>
<div style="position:absolute;left:43px;top:1046px;width:2005px;height:1px;background:#4b4e69;"></div>
<div style="position:absolute;left:43px;top:1078px;width:2005px;height:1px;background:#4b4e69;"></div>
<div style="position:absolute;left:43px;top:1110px;width:2005px;height:1px;background:#4b4e69;"></div>
<div style="position:absolute;left:43px;top:1143px;width:2005px;height:1px;background:#4b4e69;"></div>
<div style="position:absolute;left:72px;top:497px;width:1px;height:646px;background:#4b4e69;"></div>
<div style="position:absolute;left:396px;top:497px;width:1px;height:613px;background:#4b4e69;"></div>
<div style="position:absolute;left:517px;top:497px;width:1px;height:613px;background:#4b4e69;"></div>
<div style="position:absolute;left:605px;top:497px;width:1px;height:613px;background:#4b4e69;"></div>
<div style="position:absolute;left:693px;top:497px;width:1px;height:613px;background:#4b4e69;"></div>
<div style="position:absolute;left:781px;top:497px;width:1px;height:613px;background:#4b4e69;"></div>
<div style="position:absolute;left:906px;top:497px;width:1px;height:613px;background:#4b4e69;"></div>
<div style="position:absolute;left:1075px;top:497px;width:1px;height:613px;background:#4b4e69;"></div>
<div style="position:absolute;left:1201px;top:497px;width:1px;height:613px;background:#4b4e69;"></div>
<div style="position:absolute;left:1326px;top:497px;width:1px;height:613px;background:#4b4e69;"></div>
<div style="position:absolute;left:1452px;top:497px;width:1px;height:613px;background:#4b4e69;"></div>
<div style="position:absolute;left:1578px;top:497px;width:1px;height:613px;background:#4b4e69;"></div>
<div style="position:absolute;left:1703px;top:497px;width:1px;height:613px;background:#4b4e69;"></div>
<div style="position:absolute;left:1829px;top:497px;width:1px;height:613px;background:#4b4e69;"></div>
<div style="position:absolute;left:1955px;top:497px;width:1px;height:613px;background:#4b4e69;"></div>
<div style="position:absolute;left:307px;top:529px;width:1px;height:581px;background:#4b4e69;"></div>
<div style="position:absolute;left:50px;top:506px;width:15px;height:15px;border:1px solid #74778e;border-radius:3px;box-sizing:border-box;"></div>
<div style="position:absolute;left:72px;width:324px;top:506.59px;font-size:12.3px;line-height:12.3px;color:#d5d8df;font-weight:400;letter-spacing:0px;white-space:nowrap;text-align:center;transform:scaleX(0.9526);transform-origin:50% 0;">Task</div>
<div style="position:absolute;left:396px;width:121px;top:506.59px;font-size:12.3px;line-height:12.3px;color:#d5d8df;font-weight:400;letter-spacing:0.227px;white-space:nowrap;text-align:center;">Last updated</div>
<div style="position:absolute;left:517px;width:88px;top:506.59px;font-size:12.3px;line-height:12.3px;color:#d5d8df;font-weight:400;letter-spacing:0px;white-space:nowrap;text-align:center;transform:scaleX(0.9512);transform-origin:50% 0;">PIC</div>
<svg style="position:absolute;left:582.0px;top:506.79999999999995px;overflow:visible;" width="13" height="13" viewBox="0 0 13 13"><circle cx="6.5" cy="6.5" r="5.4" fill="none" stroke="#d5d8df" stroke-width="1.2"/><rect x="5.8" y="5.6" width="1.5" height="4" fill="#d5d8df"/><circle cx="6.55" cy="3.9" r="0.85" fill="#d5d8df"/></svg>
<div style="position:absolute;left:605px;width:88px;top:506.59px;font-size:12.3px;line-height:12.3px;color:#d5d8df;font-weight:400;letter-spacing:-0.05px;white-space:nowrap;text-align:center;">Collaborat...</div>
<div style="position:absolute;left:693px;width:88px;top:506.59px;font-size:12.3px;line-height:12.3px;color:#d5d8df;font-weight:400;letter-spacing:0px;white-space:nowrap;text-align:center;transform:scaleX(0.9481);transform-origin:50% 0;">Sales</div>
<div style="position:absolute;left:781px;width:125px;top:506.59px;font-size:12.3px;line-height:12.3px;color:#d5d8df;font-weight:400;letter-spacing:0.3px;white-space:nowrap;text-align:center;">Status</div>
<svg style="position:absolute;left:883.0px;top:506.79999999999995px;overflow:visible;" width="13" height="13" viewBox="0 0 13 13"><circle cx="6.5" cy="6.5" r="5.4" fill="none" stroke="#d5d8df" stroke-width="1.2"/><rect x="5.8" y="5.6" width="1.5" height="4" fill="#d5d8df"/><circle cx="6.55" cy="3.9" r="0.85" fill="#d5d8df"/></svg>
<div style="position:absolute;left:906px;width:169px;top:506.59px;font-size:12.3px;line-height:12.3px;color:#d5d8df;font-weight:400;letter-spacing:0.233px;white-space:nowrap;text-align:center;">Dependency</div>
<svg style="position:absolute;left:1052.0px;top:506.79999999999995px;overflow:visible;" width="13" height="13" viewBox="0 0 13 13"><circle cx="6.5" cy="6.5" r="5.4" fill="none" stroke="#d5d8df" stroke-width="1.2"/><rect x="5.8" y="5.6" width="1.5" height="4" fill="#d5d8df"/><circle cx="6.55" cy="3.9" r="0.85" fill="#d5d8df"/></svg>
<div style="position:absolute;left:1075px;width:126px;top:506.59px;font-size:12.3px;line-height:12.3px;color:#d5d8df;font-weight:400;letter-spacing:0.229px;white-space:nowrap;text-align:center;">Duration</div>
<svg style="position:absolute;left:1178.0px;top:506.79999999999995px;overflow:visible;" width="13" height="13" viewBox="0 0 13 13"><circle cx="6.5" cy="6.5" r="5.4" fill="none" stroke="#d5d8df" stroke-width="1.2"/><rect x="5.8" y="5.6" width="1.5" height="4" fill="#d5d8df"/><circle cx="6.55" cy="3.9" r="0.85" fill="#d5d8df"/></svg>
<div style="position:absolute;left:1201px;width:125px;top:506.59px;font-size:12.3px;line-height:12.3px;color:#d5d8df;font-weight:400;letter-spacing:0.344px;white-space:nowrap;text-align:center;">Start date</div>
<div style="position:absolute;left:1326px;width:126px;top:506.59px;font-size:12.3px;line-height:12.3px;color:#d5d8df;font-weight:400;letter-spacing:0px;white-space:nowrap;text-align:center;transform:scaleX(0.9759);transform-origin:50% 0;">ETD Date</div>
<div style="position:absolute;left:1452px;width:126px;top:506.59px;font-size:12.3px;line-height:12.3px;color:#d5d8df;font-weight:400;letter-spacing:-0.014px;white-space:nowrap;text-align:center;">Due Date</div>
<svg style="position:absolute;left:1555.0px;top:506.79999999999995px;overflow:visible;" width="13" height="13" viewBox="0 0 13 13"><circle cx="6.5" cy="6.5" r="5.4" fill="none" stroke="#d5d8df" stroke-width="1.2"/><rect x="5.8" y="5.6" width="1.5" height="4" fill="#d5d8df"/><circle cx="6.55" cy="3.9" r="0.85" fill="#d5d8df"/></svg>
<div style="position:absolute;left:1578px;width:125px;top:506.59px;font-size:12.3px;line-height:12.3px;color:#d5d8df;font-weight:400;letter-spacing:0.19px;white-space:nowrap;text-align:center;">Actual Date</div>
<div style="position:absolute;left:1703px;width:126px;top:506.59px;font-size:12.3px;line-height:12.3px;color:#d5d8df;font-weight:400;letter-spacing:0.1px;white-space:nowrap;text-align:center;">Timeline</div>
<svg style="position:absolute;left:1806.0px;top:506.79999999999995px;overflow:visible;" width="13" height="13" viewBox="0 0 13 13"><circle cx="6.5" cy="6.5" r="5.4" fill="none" stroke="#d5d8df" stroke-width="1.2"/><rect x="5.8" y="5.6" width="1.5" height="4" fill="#d5d8df"/><circle cx="6.55" cy="3.9" r="0.85" fill="#d5d8df"/></svg>
<div style="position:absolute;left:1829px;width:126px;top:506.59px;font-size:12.3px;line-height:12.3px;color:#d5d8df;font-weight:400;letter-spacing:0.144px;white-space:nowrap;text-align:center;">Monday Doc</div>
<div style="position:absolute;left:1955px;width:126px;top:506.59px;font-size:12.3px;line-height:12.3px;color:#d5d8df;font-weight:400;letter-spacing:0px;white-space:nowrap;text-align:center;transform:scaleX(0.9615);transform-origin:50% 0;">Files</div>
<div style="position:absolute;left:50px;top:538px;width:15px;height:15px;border:1px solid #74778e;border-radius:3px;box-sizing:border-box;"></div>
<svg style="position:absolute;left:82px;top:539.8px;overflow:visible;" width="8" height="12" viewBox="0 0 8 12"><polyline points="1.5,1.2 6,6 1.5,10.8" fill="none" stroke="#d5d8df" stroke-width="1.4"/></svg>
<div style="position:absolute;left:103.6px;top:540.39px;font-size:12.3px;line-height:12.3px;color:#d5d8df;font-weight:400;letter-spacing:0px;white-space:nowrap;transform:scaleX(0.9762);transform-origin:0 0;">Box Design</div>
<div style="position:absolute;left:172.1px;top:539.1px;height:13px;width:13px;border-radius:3px;background:#3e4160;color:#d5d8df;font-size:11px;line-height:13px;text-align:center;">7</div>
<svg style="position:absolute;left:327.0px;top:536.1px;overflow:visible;" width="17" height="17" viewBox="0 0 17 17"><path d="M6.30 6.30 C 7.30 5.40 7.65 3.70 7.80 2.20 Q 8.50 0.50 9.20 2.20 C 9.35 3.70 9.70 5.40 10.70 6.30 C 11.60 7.30 13.30 7.65 14.80 7.80 Q 16.50 8.50 14.80 9.20 C 13.30 9.35 11.60 9.70 10.70 10.70 C 9.70 11.60 9.35 13.30 9.20 14.80 Q 8.50 16.50 7.80 14.80 C 7.65 13.30 7.30 11.60 6.30 10.70 C 5.40 9.70 3.70 9.35 2.20 9.20 Q 0.50 8.50 2.20 7.80 C 3.70 7.65 5.40 7.30 6.30 6.30Z" fill="none" stroke="#d5d8df" stroke-width="1.3" stroke-linejoin="round"/></svg>
<svg style="position:absolute;left:357.7px;top:536.9px;overflow:visible;" width="16" height="16" viewBox="0 0 16 16"><g fill="none" stroke="#d5d8df" stroke-width="1.35" stroke-linecap="round" stroke-linejoin="round"><path d="M8.4 0.9 C12.4 0.9 15 3.7 15 7.3 C15 10.9 12.3 13.7 8.4 13.7 C7.2 13.7 6.2 13.4 5.2 13 L1.1 14.6 L2.4 11 C1.9 9.9 1.7 8.6 1.7 7.3 C1.7 3.7 4.4 0.9 8.4 0.9Z"/><line x1="8.4" y1="4.4" x2="8.4" y2="10.2"/><line x1="5.5" y1="7.3" x2="11.3" y2="7.3"/></g></svg>
<svg style="position:absolute;left:403.8px;top:533.8px;overflow:visible;" width="22.4" height="22.4" viewBox="0 0 24 24"><defs><clipPath id="cw8"><circle cx="12" cy="12" r="12"/></clipPath></defs><g clip-path="url(#cw8)"><rect width="24" height="24" fill="#9cba8e"/><path d="M3 24 C3.5 19.5 6 17 9.5 16 C12 15.4 15.5 15.5 18.5 16.6 C21 17.6 22 20 22.5 24Z" fill="#d4bb95"/><path d="M15 17 C17 17 18.5 18.5 19 20.5 L15.5 22Z" fill="#e6dcc8"/><path d="M9.6 6.2 C10.6 4.9 13.8 4.8 15.2 6.8 C16.2 8.4 15.8 11 15.2 12.6 L13.6 14.2 C12.8 16.2 12.8 20.2 13.2 24 L8.4 24 C7.8 20.2 7.4 17 7.9 14 C8.4 11 8.5 8 9.6 6.2Z" fill="#5b3222"/><ellipse cx="13" cy="10.6" rx="2.3" ry="3.1" fill="#d9a486"/></g></svg>
<div style="position:absolute;left:440.3px;top:539.70px;font-size:12.4px;line-height:12.4px;color:#d5d8df;font-weight:400;letter-spacing:0px;white-space:nowrap;transform:scaleX(0.9296);transform-origin:0 0;">2 weeks ago</div>
<svg style="position:absolute;left:549.8px;top:533.5px;overflow:visible;" width="24" height="24" viewBox="0 0 24 24"><g fill="none" stroke="#d5d8df" stroke-width="1.2"><circle cx="12" cy="12" r="11.1"/><circle cx="11.6" cy="9.9" r="4.2"/><path d="M4.6 19.7 C6.2 16.8 8.8 15.3 11.7 15.3 C14.6 15.3 17.2 16.8 18.8 19.7"/></g></svg>
<svg style="position:absolute;left:637.7px;top:533.5px;overflow:visible;" width="24" height="24" viewBox="0 0 24 24"><g fill="none" stroke="#d5d8df" stroke-width="1.2"><circle cx="12" cy="12" r="11.1"/><circle cx="11.6" cy="9.9" r="4.2"/><path d="M4.6 19.7 C6.2 16.8 8.8 15.3 11.7 15.3 C14.6 15.3 17.2 16.8 18.8 19.7"/></g></svg>
<svg style="position:absolute;left:725.6px;top:533.5px;overflow:visible;" width="24" height="24" viewBox="0 0 24 24"><g fill="none" stroke="#d5d8df" stroke-width="1.2"><circle cx="12" cy="12" r="11.1"/><circle cx="11.6" cy="9.9" r="4.2"/><path d="M4.6 19.7 C6.2 16.8 8.8 15.3 11.7 15.3 C14.6 15.3 17.2 16.8 18.8 19.7"/></g></svg>
<div style="position:absolute;left:782px;top:530px;width:124px;height:31px;background:#ffd533;"></div>
<div style="position:absolute;left:782px;width:124px;top:539.19px;font-size:12.3px;line-height:12.3px;color:#ffffff;font-weight:400;letter-spacing:0.267px;white-space:nowrap;text-align:center;">Todo</div>
<div style="position:absolute;left:918.4px;top:535.1px;width:145.4px;height:20px;border-radius:3px;background:#133a7f;box-shadow:0 0 0 1px #0d2452;"></div>
<div style="position:absolute;left:926.3px;top:539.39px;font-size:12.3px;line-height:12.3px;color:#d5d8df;font-weight:400;letter-spacing:0.096px;white-space:nowrap;">Update Project Timeli...</div>
<div style="position:absolute;left:1075px;width:126px;top:539.19px;font-size:12.3px;line-height:12.3px;color:#d5d8df;font-weight:400;letter-spacing:0px;white-space:nowrap;text-align:center;transform:scaleX(0.9629);transform-origin:50% 0;">28 days</div>
<div style="position:absolute;left:1718.4px;top:535.3px;width:96.6px;height:20.5px;border-radius:10.25px;background:#c4c4c4;"></div>
<div style="position:absolute;left:1764px;top:545px;width:4.5px;height:1.2px;background:#f4f4f4;"></div>
<svg style="position:absolute;left:1884.7px;top:535.0px;overflow:visible;" width="15" height="20" viewBox="0 0 15 20"><path d="M2.6 0.6 L9.6 0.6 L14.4 5.6 L14.4 17 C14.4 18.5 13.5 19.4 12 19.4 L2.6 19.4 C1.3 19.4 0.6 18.6 0.6 17.2 L0.6 2.8 C0.6 1.4 1.3 0.6 2.6 0.6Z" fill="#fbf6e9" stroke="#fbf6e9" stroke-width="0.6"/><g stroke-width="1.9" stroke-linecap="round"><line x1="3.7" y1="12.2" x2="5.6" y2="9" stroke="#a8563f"/><line x1="6.6" y1="12.2" x2="8.5" y2="9" stroke="#f5c000"/></g><circle cx="10.7" cy="11.8" r="1.05" fill="#2a8fd8"/></svg>
<div style="position:absolute;left:50px;top:570px;width:15px;height:15px;border:1px solid #74778e;border-radius:3px;box-sizing:border-box;"></div>
<svg style="position:absolute;left:82px;top:571.8px;overflow:visible;" width="8" height="12" viewBox="0 0 8 12"><polyline points="1.5,1.2 6,6 1.5,10.8" fill="none" stroke="#d5d8df" stroke-width="1.4"/></svg>
<div style="position:absolute;left:103.6px;top:572.39px;font-size:12.3px;line-height:12.3px;color:#d5d8df;font-weight:400;letter-spacing:-0.044px;white-space:nowrap;">Tin Design</div>
<div style="position:absolute;left:169.0px;top:571.1px;height:13px;width:13px;border-radius:3px;background:#3e4160;color:#d5d8df;font-size:11px;line-height:13px;text-align:center;">7</div>
<svg style="position:absolute;left:327.0px;top:568.1px;overflow:visible;" width="17" height="17" viewBox="0 0 17 17"><path d="M6.30 6.30 C 7.30 5.40 7.65 3.70 7.80 2.20 Q 8.50 0.50 9.20 2.20 C 9.35 3.70 9.70 5.40 10.70 6.30 C 11.60 7.30 13.30 7.65 14.80 7.80 Q 16.50 8.50 14.80 9.20 C 13.30 9.35 11.60 9.70 10.70 10.70 C 9.70 11.60 9.35 13.30 9.20 14.80 Q 8.50 16.50 7.80 14.80 C 7.65 13.30 7.30 11.60 6.30 10.70 C 5.40 9.70 3.70 9.35 2.20 9.20 Q 0.50 8.50 2.20 7.80 C 3.70 7.65 5.40 7.30 6.30 6.30Z" fill="none" stroke="#d5d8df" stroke-width="1.3" stroke-linejoin="round"/></svg>
<svg style="position:absolute;left:357.7px;top:568.9px;overflow:visible;" width="16" height="16" viewBox="0 0 16 16"><g fill="none" stroke="#d5d8df" stroke-width="1.35" stroke-linecap="round" stroke-linejoin="round"><path d="M8.4 0.9 C12.4 0.9 15 3.7 15 7.3 C15 10.9 12.3 13.7 8.4 13.7 C7.2 13.7 6.2 13.4 5.2 13 L1.1 14.6 L2.4 11 C1.9 9.9 1.7 8.6 1.7 7.3 C1.7 3.7 4.4 0.9 8.4 0.9Z"/><line x1="8.4" y1="4.4" x2="8.4" y2="10.2"/><line x1="5.5" y1="7.3" x2="11.3" y2="7.3"/></g></svg>
<svg style="position:absolute;left:403.8px;top:565.8px;overflow:visible;" width="22.4" height="22.4" viewBox="0 0 24 24"><defs><clipPath id="cw9"><circle cx="12" cy="12" r="12"/></clipPath></defs><g clip-path="url(#cw9)"><rect width="24" height="24" fill="#9cba8e"/><path d="M3 24 C3.5 19.5 6 17 9.5 16 C12 15.4 15.5 15.5 18.5 16.6 C21 17.6 22 20 22.5 24Z" fill="#d4bb95"/><path d="M15 17 C17 17 18.5 18.5 19 20.5 L15.5 22Z" fill="#e6dcc8"/><path d="M9.6 6.2 C10.6 4.9 13.8 4.8 15.2 6.8 C16.2 8.4 15.8 11 15.2 12.6 L13.6 14.2 C12.8 16.2 12.8 20.2 13.2 24 L8.4 24 C7.8 20.2 7.4 17 7.9 14 C8.4 11 8.5 8 9.6 6.2Z" fill="#5b3222"/><ellipse cx="13" cy="10.6" rx="2.3" ry="3.1" fill="#d9a486"/></g></svg>
<div style="position:absolute;left:440.3px;top:571.70px;font-size:12.4px;line-height:12.4px;color:#d5d8df;font-weight:400;letter-spacing:0px;white-space:nowrap;transform:scaleX(0.9296);transform-origin:0 0;">2 weeks ago</div>
<svg style="position:absolute;left:549.8px;top:565.5px;overflow:visible;" width="24" height="24" viewBox="0 0 24 24"><g fill="none" stroke="#d5d8df" stroke-width="1.2"><circle cx="12" cy="12" r="11.1"/><circle cx="11.6" cy="9.9" r="4.2"/><path d="M4.6 19.7 C6.2 16.8 8.8 15.3 11.7 15.3 C14.6 15.3 17.2 16.8 18.8 19.7"/></g></svg>
<svg style="position:absolute;left:637.7px;top:565.5px;overflow:visible;" width="24" height="24" viewBox="0 0 24 24"><g fill="none" stroke="#d5d8df" stroke-width="1.2"><circle cx="12" cy="12" r="11.1"/><circle cx="11.6" cy="9.9" r="4.2"/><path d="M4.6 19.7 C6.2 16.8 8.8 15.3 11.7 15.3 C14.6 15.3 17.2 16.8 18.8 19.7"/></g></svg>
<svg style="position:absolute;left:725.6px;top:565.5px;overflow:visible;" width="24" height="24" viewBox="0 0 24 24"><g fill="none" stroke="#d5d8df" stroke-width="1.2"><circle cx="12" cy="12" r="11.1"/><circle cx="11.6" cy="9.9" r="4.2"/><path d="M4.6 19.7 C6.2 16.8 8.8 15.3 11.7 15.3 C14.6 15.3 17.2 16.8 18.8 19.7"/></g></svg>
<div style="position:absolute;left:782px;top:562px;width:124px;height:31px;background:#ffd533;"></div>
<div style="position:absolute;left:782px;width:124px;top:571.19px;font-size:12.3px;line-height:12.3px;color:#ffffff;font-weight:400;letter-spacing:0.267px;white-space:nowrap;text-align:center;">Todo</div>
<div style="position:absolute;left:918.4px;top:567.1px;width:145.4px;height:20px;border-radius:3px;background:#133a7f;box-shadow:0 0 0 1px #0d2452;"></div>
<div style="position:absolute;left:926.3px;top:571.39px;font-size:12.3px;line-height:12.3px;color:#d5d8df;font-weight:400;letter-spacing:0.096px;white-space:nowrap;">Update Project Timeli...</div>
<div style="position:absolute;left:1075px;width:126px;top:571.19px;font-size:12.3px;line-height:12.3px;color:#d5d8df;font-weight:400;letter-spacing:0px;white-space:nowrap;text-align:center;transform:scaleX(0.9629);transform-origin:50% 0;">21 days</div>
<div style="position:absolute;left:1718.4px;top:567.3px;width:96.6px;height:20.5px;border-radius:10.25px;background:#c4c4c4;"></div>
<div style="position:absolute;left:1764px;top:577px;width:4.5px;height:1.2px;background:#f4f4f4;"></div>
<svg style="position:absolute;left:1884.7px;top:567.0px;overflow:visible;" width="15" height="20" viewBox="0 0 15 20"><path d="M2.6 0.6 L9.6 0.6 L14.4 5.6 L14.4 17 C14.4 18.5 13.5 19.4 12 19.4 L2.6 19.4 C1.3 19.4 0.6 18.6 0.6 17.2 L0.6 2.8 C0.6 1.4 1.3 0.6 2.6 0.6Z" fill="none" stroke="#d5d8df" stroke-width="1.2"/><g stroke="#d5d8df" stroke-width="1.9" stroke-linecap="round"><line x1="3.7" y1="12.2" x2="5.6" y2="9"/><line x1="6.6" y1="12.2" x2="8.5" y2="9"/></g><circle cx="10.7" cy="11.8" r="1.05" fill="#d5d8df"/></svg>
<div style="position:absolute;left:50px;top:602px;width:15px;height:15px;border:1px solid #74778e;border-radius:3px;box-sizing:border-box;"></div>
<svg style="position:absolute;left:82px;top:604.3px;overflow:visible;" width="8" height="12" viewBox="0 0 8 12"><polyline points="1.5,1.2 6,6 1.5,10.8" fill="none" stroke="#d5d8df" stroke-width="1.4"/></svg>
<div style="position:absolute;left:103.6px;top:604.39px;font-size:12.3px;line-height:12.3px;color:#d5d8df;font-weight:400;letter-spacing:0.092px;white-space:nowrap;">Sticker Design</div>
<div style="position:absolute;left:190.3px;top:603.6px;height:13px;width:13px;border-radius:3px;background:#3e4160;color:#d5d8df;font-size:11px;line-height:13px;text-align:center;">7</div>
<svg style="position:absolute;left:327.0px;top:600.6px;overflow:visible;" width="17" height="17" viewBox="0 0 17 17"><path d="M6.30 6.30 C 7.30 5.40 7.65 3.70 7.80 2.20 Q 8.50 0.50 9.20 2.20 C 9.35 3.70 9.70 5.40 10.70 6.30 C 11.60 7.30 13.30 7.65 14.80 7.80 Q 16.50 8.50 14.80 9.20 C 13.30 9.35 11.60 9.70 10.70 10.70 C 9.70 11.60 9.35 13.30 9.20 14.80 Q 8.50 16.50 7.80 14.80 C 7.65 13.30 7.30 11.60 6.30 10.70 C 5.40 9.70 3.70 9.35 2.20 9.20 Q 0.50 8.50 2.20 7.80 C 3.70 7.65 5.40 7.30 6.30 6.30Z" fill="none" stroke="#d5d8df" stroke-width="1.3" stroke-linejoin="round"/></svg>
<svg style="position:absolute;left:357.7px;top:601.4px;overflow:visible;" width="16" height="16" viewBox="0 0 16 16"><g fill="none" stroke="#d5d8df" stroke-width="1.35" stroke-linecap="round" stroke-linejoin="round"><path d="M8.4 0.9 C12.4 0.9 15 3.7 15 7.3 C15 10.9 12.3 13.7 8.4 13.7 C7.2 13.7 6.2 13.4 5.2 13 L1.1 14.6 L2.4 11 C1.9 9.9 1.7 8.6 1.7 7.3 C1.7 3.7 4.4 0.9 8.4 0.9Z"/><line x1="8.4" y1="4.4" x2="8.4" y2="10.2"/><line x1="5.5" y1="7.3" x2="11.3" y2="7.3"/></g></svg>
<svg style="position:absolute;left:403.8px;top:598.3px;overflow:visible;" width="22.4" height="22.4" viewBox="0 0 24 24"><defs><clipPath id="cw10"><circle cx="12" cy="12" r="12"/></clipPath></defs><g clip-path="url(#cw10)"><rect width="24" height="24" fill="#9cba8e"/><path d="M3 24 C3.5 19.5 6 17 9.5 16 C12 15.4 15.5 15.5 18.5 16.6 C21 17.6 22 20 22.5 24Z" fill="#d4bb95"/><path d="M15 17 C17 17 18.5 18.5 19 20.5 L15.5 22Z" fill="#e6dcc8"/><path d="M9.6 6.2 C10.6 4.9 13.8 4.8 15.2 6.8 C16.2 8.4 15.8 11 15.2 12.6 L13.6 14.2 C12.8 16.2 12.8 20.2 13.2 24 L8.4 24 C7.8 20.2 7.4 17 7.9 14 C8.4 11 8.5 8 9.6 6.2Z" fill="#5b3222"/><ellipse cx="13" cy="10.6" rx="2.3" ry="3.1" fill="#d9a486"/></g></svg>
<div style="position:absolute;left:440.3px;top:603.70px;font-size:12.4px;line-height:12.4px;color:#d5d8df;font-weight:400;letter-spacing:0px;white-space:nowrap;transform:scaleX(0.9296);transform-origin:0 0;">2 weeks ago</div>
<svg style="position:absolute;left:549.8px;top:598.0px;overflow:visible;" width="24" height="24" viewBox="0 0 24 24"><g fill="none" stroke="#d5d8df" stroke-width="1.2"><circle cx="12" cy="12" r="11.1"/><circle cx="11.6" cy="9.9" r="4.2"/><path d="M4.6 19.7 C6.2 16.8 8.8 15.3 11.7 15.3 C14.6 15.3 17.2 16.8 18.8 19.7"/></g></svg>
<svg style="position:absolute;left:637.7px;top:598.0px;overflow:visible;" width="24" height="24" viewBox="0 0 24 24"><g fill="none" stroke="#d5d8df" stroke-width="1.2"><circle cx="12" cy="12" r="11.1"/><circle cx="11.6" cy="9.9" r="4.2"/><path d="M4.6 19.7 C6.2 16.8 8.8 15.3 11.7 15.3 C14.6 15.3 17.2 16.8 18.8 19.7"/></g></svg>
<svg style="position:absolute;left:725.6px;top:598.0px;overflow:visible;" width="24" height="24" viewBox="0 0 24 24"><g fill="none" stroke="#d5d8df" stroke-width="1.2"><circle cx="12" cy="12" r="11.1"/><circle cx="11.6" cy="9.9" r="4.2"/><path d="M4.6 19.7 C6.2 16.8 8.8 15.3 11.7 15.3 C14.6 15.3 17.2 16.8 18.8 19.7"/></g></svg>
<div style="position:absolute;left:782px;top:594px;width:124px;height:32px;background:#ffd533;"></div>
<div style="position:absolute;left:782px;width:124px;top:603.19px;font-size:12.3px;line-height:12.3px;color:#ffffff;font-weight:400;letter-spacing:0.267px;white-space:nowrap;text-align:center;">Todo</div>
<div style="position:absolute;left:918.4px;top:599.6px;width:145.4px;height:20px;border-radius:3px;background:#133a7f;box-shadow:0 0 0 1px #0d2452;"></div>
<div style="position:absolute;left:926.3px;top:603.39px;font-size:12.3px;line-height:12.3px;color:#d5d8df;font-weight:400;letter-spacing:0.096px;white-space:nowrap;">Update Project Timeli...</div>
<div style="position:absolute;left:1075px;width:126px;top:603.19px;font-size:12.3px;line-height:12.3px;color:#d5d8df;font-weight:400;letter-spacing:0px;white-space:nowrap;text-align:center;transform:scaleX(0.9629);transform-origin:50% 0;">21 days</div>
<div style="position:absolute;left:1718.4px;top:599.8px;width:96.6px;height:20.5px;border-radius:10.25px;background:#c4c4c4;"></div>
<div style="position:absolute;left:1764px;top:610px;width:4.5px;height:1.2px;background:#f4f4f4;"></div>
<svg style="position:absolute;left:1884.7px;top:599.5px;overflow:visible;" width="15" height="20" viewBox="0 0 15 20"><path d="M2.6 0.6 L9.6 0.6 L14.4 5.6 L14.4 17 C14.4 18.5 13.5 19.4 12 19.4 L2.6 19.4 C1.3 19.4 0.6 18.6 0.6 17.2 L0.6 2.8 C0.6 1.4 1.3 0.6 2.6 0.6Z" fill="none" stroke="#d5d8df" stroke-width="1.2"/><g stroke="#d5d8df" stroke-width="1.9" stroke-linecap="round"><line x1="3.7" y1="12.2" x2="5.6" y2="9"/><line x1="6.6" y1="12.2" x2="8.5" y2="9"/></g><circle cx="10.7" cy="11.8" r="1.05" fill="#d5d8df"/></svg>
<div style="position:absolute;left:50px;top:635px;width:15px;height:15px;border:1px solid #74778e;border-radius:3px;box-sizing:border-box;"></div>
<svg style="position:absolute;left:82px;top:636.8px;overflow:visible;" width="8" height="12" viewBox="0 0 8 12"><polyline points="1.5,1.2 6,6 1.5,10.8" fill="none" stroke="#d5d8df" stroke-width="1.4"/></svg>
<div style="position:absolute;left:103.6px;top:637.39px;font-size:12.3px;line-height:12.3px;color:#d5d8df;font-weight:400;letter-spacing:-0.007px;white-space:nowrap;">Case (Display, Top, Box) Design</div>
<div style="position:absolute;left:285.7px;top:636.1px;height:13px;width:13px;border-radius:3px;background:#3e4160;color:#d5d8df;font-size:11px;line-height:13px;text-align:center;">2</div>
<svg style="position:absolute;left:327.0px;top:633.1px;overflow:visible;" width="17" height="17" viewBox="0 0 17 17"><path d="M6.30 6.30 C 7.30 5.40 7.65 3.70 7.80 2.20 Q 8.50 0.50 9.20 2.20 C 9.35 3.70 9.70 5.40 10.70 6.30 C 11.60 7.30 13.30 7.65 14.80 7.80 Q 16.50 8.50 14.80 9.20 C 13.30 9.35 11.60 9.70 10.70 10.70 C 9.70 11.60 9.35 13.30 9.20 14.80 Q 8.50 16.50 7.80 14.80 C 7.65 13.30 7.30 11.60 6.30 10.70 C 5.40 9.70 3.70 9.35 2.20 9.20 Q 0.50 8.50 2.20 7.80 C 3.70 7.65 5.40 7.30 6.30 6.30Z" fill="none" stroke="#d5d8df" stroke-width="1.3" stroke-linejoin="round"/></svg>
<svg style="position:absolute;left:357.7px;top:633.9px;overflow:visible;" width="16" height="16" viewBox="0 0 16 16"><g fill="none" stroke="#d5d8df" stroke-width="1.35" stroke-linecap="round" stroke-linejoin="round"><path d="M8.4 0.9 C12.4 0.9 15 3.7 15 7.3 C15 10.9 12.3 13.7 8.4 13.7 C7.2 13.7 6.2 13.4 5.2 13 L1.1 14.6 L2.4 11 C1.9 9.9 1.7 8.6 1.7 7.3 C1.7 3.7 4.4 0.9 8.4 0.9Z"/><line x1="8.4" y1="4.4" x2="8.4" y2="10.2"/><line x1="5.5" y1="7.3" x2="11.3" y2="7.3"/></g></svg>
<svg style="position:absolute;left:403.8px;top:630.8px;overflow:visible;" width="22.4" height="22.4" viewBox="0 0 24 24"><defs><clipPath id="cw11"><circle cx="12" cy="12" r="12"/></clipPath></defs><g clip-path="url(#cw11)"><rect width="24" height="24" fill="#9cba8e"/><path d="M3 24 C3.5 19.5 6 17 9.5 16 C12 15.4 15.5 15.5 18.5 16.6 C21 17.6 22 20 22.5 24Z" fill="#d4bb95"/><path d="M15 17 C17 17 18.5 18.5 19 20.5 L15.5 22Z" fill="#e6dcc8"/><path d="M9.6 6.2 C10.6 4.9 13.8 4.8 15.2 6.8 C16.2 8.4 15.8 11 15.2 12.6 L13.6 14.2 C12.8 16.2 12.8 20.2 13.2 24 L8.4 24 C7.8 20.2 7.4 17 7.9 14 C8.4 11 8.5 8 9.6 6.2Z" fill="#5b3222"/><ellipse cx="13" cy="10.6" rx="2.3" ry="3.1" fill="#d9a486"/></g></svg>
<div style="position:absolute;left:440.3px;top:636.70px;font-size:12.4px;line-height:12.4px;color:#d5d8df;font-weight:400;letter-spacing:0px;white-space:nowrap;transform:scaleX(0.9296);transform-origin:0 0;">2 weeks ago</div>
<svg style="position:absolute;left:549.8px;top:630.5px;overflow:visible;" width="24" height="24" viewBox="0 0 24 24"><g fill="none" stroke="#d5d8df" stroke-width="1.2"><circle cx="12" cy="12" r="11.1"/><circle cx="11.6" cy="9.9" r="4.2"/><path d="M4.6 19.7 C6.2 16.8 8.8 15.3 11.7 15.3 C14.6 15.3 17.2 16.8 18.8 19.7"/></g></svg>
<svg style="position:absolute;left:637.7px;top:630.5px;overflow:visible;" width="24" height="24" viewBox="0 0 24 24"><g fill="none" stroke="#d5d8df" stroke-width="1.2"><circle cx="12" cy="12" r="11.1"/><circle cx="11.6" cy="9.9" r="4.2"/><path d="M4.6 19.7 C6.2 16.8 8.8 15.3 11.7 15.3 C14.6 15.3 17.2 16.8 18.8 19.7"/></g></svg>
<svg style="position:absolute;left:725.6px;top:630.5px;overflow:visible;" width="24" height="24" viewBox="0 0 24 24"><g fill="none" stroke="#d5d8df" stroke-width="1.2"><circle cx="12" cy="12" r="11.1"/><circle cx="11.6" cy="9.9" r="4.2"/><path d="M4.6 19.7 C6.2 16.8 8.8 15.3 11.7 15.3 C14.6 15.3 17.2 16.8 18.8 19.7"/></g></svg>
<div style="position:absolute;left:782px;top:627px;width:124px;height:31px;background:#ffd533;"></div>
<div style="position:absolute;left:782px;width:124px;top:636.19px;font-size:12.3px;line-height:12.3px;color:#ffffff;font-weight:400;letter-spacing:0.267px;white-space:nowrap;text-align:center;">Todo</div>
<div style="position:absolute;left:918.4px;top:632.1px;width:145.4px;height:20px;border-radius:3px;background:#133a7f;box-shadow:0 0 0 1px #0d2452;"></div>
<div style="position:absolute;left:926.3px;top:636.39px;font-size:12.3px;line-height:12.3px;color:#d5d8df;font-weight:400;letter-spacing:0.096px;white-space:nowrap;">Update Project Timeli...</div>
<div style="position:absolute;left:1075px;width:126px;top:636.19px;font-size:12.3px;line-height:12.3px;color:#d5d8df;font-weight:400;letter-spacing:0px;white-space:nowrap;text-align:center;transform:scaleX(0.9530);transform-origin:50% 0;">5 days</div>
<div style="position:absolute;left:1718.4px;top:632.3px;width:96.6px;height:20.5px;border-radius:10.25px;background:#c4c4c4;"></div>
<div style="position:absolute;left:1764px;top:642px;width:4.5px;height:1.2px;background:#f4f4f4;"></div>
<svg style="position:absolute;left:1884.7px;top:632.0px;overflow:visible;" width="15" height="20" viewBox="0 0 15 20"><path d="M2.6 0.6 L9.6 0.6 L14.4 5.6 L14.4 17 C14.4 18.5 13.5 19.4 12 19.4 L2.6 19.4 C1.3 19.4 0.6 18.6 0.6 17.2 L0.6 2.8 C0.6 1.4 1.3 0.6 2.6 0.6Z" fill="none" stroke="#d5d8df" stroke-width="1.2"/><g stroke="#d5d8df" stroke-width="1.9" stroke-linecap="round"><line x1="3.7" y1="12.2" x2="5.6" y2="9"/><line x1="6.6" y1="12.2" x2="8.5" y2="9"/></g><circle cx="10.7" cy="11.8" r="1.05" fill="#d5d8df"/></svg>
<div style="position:absolute;left:50px;top:667px;width:15px;height:15px;border:1px solid #74778e;border-radius:3px;box-sizing:border-box;"></div>
<div style="position:absolute;left:103.6px;top:669.39px;font-size:12.3px;line-height:12.3px;color:#d5d8df;font-weight:400;letter-spacing:0.052px;white-space:nowrap;">Packaging Artwork Approval (Sal...</div>
<svg style="position:absolute;left:327.0px;top:665.1px;overflow:visible;" width="17" height="17" viewBox="0 0 17 17"><path d="M6.30 6.30 C 7.30 5.40 7.65 3.70 7.80 2.20 Q 8.50 0.50 9.20 2.20 C 9.35 3.70 9.70 5.40 10.70 6.30 C 11.60 7.30 13.30 7.65 14.80 7.80 Q 16.50 8.50 14.80 9.20 C 13.30 9.35 11.60 9.70 10.70 10.70 C 9.70 11.60 9.35 13.30 9.20 14.80 Q 8.50 16.50 7.80 14.80 C 7.65 13.30 7.30 11.60 6.30 10.70 C 5.40 9.70 3.70 9.35 2.20 9.20 Q 0.50 8.50 2.20 7.80 C 3.70 7.65 5.40 7.30 6.30 6.30Z" fill="none" stroke="#d5d8df" stroke-width="1.3" stroke-linejoin="round"/></svg>
<svg style="position:absolute;left:357.7px;top:665.9px;overflow:visible;" width="16" height="16" viewBox="0 0 16 16"><g fill="none" stroke="#d5d8df" stroke-width="1.35" stroke-linecap="round" stroke-linejoin="round"><path d="M8.4 0.9 C12.4 0.9 15 3.7 15 7.3 C15 10.9 12.3 13.7 8.4 13.7 C7.2 13.7 6.2 13.4 5.2 13 L1.1 14.6 L2.4 11 C1.9 9.9 1.7 8.6 1.7 7.3 C1.7 3.7 4.4 0.9 8.4 0.9Z"/><line x1="8.4" y1="4.4" x2="8.4" y2="10.2"/><line x1="5.5" y1="7.3" x2="11.3" y2="7.3"/></g></svg>
<svg style="position:absolute;left:403.8px;top:662.8px;overflow:visible;" width="22.4" height="22.4" viewBox="0 0 24 24"><defs><clipPath id="cw12"><circle cx="12" cy="12" r="12"/></clipPath></defs><g clip-path="url(#cw12)"><rect width="24" height="24" fill="#9cba8e"/><path d="M3 24 C3.5 19.5 6 17 9.5 16 C12 15.4 15.5 15.5 18.5 16.6 C21 17.6 22 20 22.5 24Z" fill="#d4bb95"/><path d="M15 17 C17 17 18.5 18.5 19 20.5 L15.5 22Z" fill="#e6dcc8"/><path d="M9.6 6.2 C10.6 4.9 13.8 4.8 15.2 6.8 C16.2 8.4 15.8 11 15.2 12.6 L13.6 14.2 C12.8 16.2 12.8 20.2 13.2 24 L8.4 24 C7.8 20.2 7.4 17 7.9 14 C8.4 11 8.5 8 9.6 6.2Z" fill="#5b3222"/><ellipse cx="13" cy="10.6" rx="2.3" ry="3.1" fill="#d9a486"/></g></svg>
<div style="position:absolute;left:440.3px;top:668.70px;font-size:12.4px;line-height:12.4px;color:#d5d8df;font-weight:400;letter-spacing:0px;white-space:nowrap;transform:scaleX(0.9296);transform-origin:0 0;">2 weeks ago</div>
<svg style="position:absolute;left:549.8px;top:662.5px;overflow:visible;" width="24" height="24" viewBox="0 0 24 24"><g fill="none" stroke="#d5d8df" stroke-width="1.2"><circle cx="12" cy="12" r="11.1"/><circle cx="11.6" cy="9.9" r="4.2"/><path d="M4.6 19.7 C6.2 16.8 8.8 15.3 11.7 15.3 C14.6 15.3 17.2 16.8 18.8 19.7"/></g></svg>
<svg style="position:absolute;left:637.7px;top:662.5px;overflow:visible;" width="24" height="24" viewBox="0 0 24 24"><g fill="none" stroke="#d5d8df" stroke-width="1.2"><circle cx="12" cy="12" r="11.1"/><circle cx="11.6" cy="9.9" r="4.2"/><path d="M4.6 19.7 C6.2 16.8 8.8 15.3 11.7 15.3 C14.6 15.3 17.2 16.8 18.8 19.7"/></g></svg>
<svg style="position:absolute;left:725.6px;top:662.5px;overflow:visible;" width="24" height="24" viewBox="0 0 24 24"><g fill="none" stroke="#d5d8df" stroke-width="1.2"><circle cx="12" cy="12" r="11.1"/><circle cx="11.6" cy="9.9" r="4.2"/><path d="M4.6 19.7 C6.2 16.8 8.8 15.3 11.7 15.3 C14.6 15.3 17.2 16.8 18.8 19.7"/></g></svg>
<div style="position:absolute;left:782px;top:659px;width:124px;height:31px;background:#ffd533;"></div>
<div style="position:absolute;left:782px;width:124px;top:668.19px;font-size:12.3px;line-height:12.3px;color:#ffffff;font-weight:400;letter-spacing:0.267px;white-space:nowrap;text-align:center;">Todo</div>
<div style="position:absolute;left:1075px;width:126px;top:668.19px;font-size:12.3px;line-height:12.3px;color:#d5d8df;font-weight:400;letter-spacing:0px;white-space:nowrap;text-align:center;transform:scaleX(0.9530);transform-origin:50% 0;">1 days</div>
<div style="position:absolute;left:1718.4px;top:664.3px;width:96.6px;height:20.5px;border-radius:10.25px;background:#c4c4c4;"></div>
<div style="position:absolute;left:1764px;top:674px;width:4.5px;height:1.2px;background:#f4f4f4;"></div>
<svg style="position:absolute;left:1884.7px;top:664.0px;overflow:visible;" width="15" height="20" viewBox="0 0 15 20"><path d="M2.6 0.6 L9.6 0.6 L14.4 5.6 L14.4 17 C14.4 18.5 13.5 19.4 12 19.4 L2.6 19.4 C1.3 19.4 0.6 18.6 0.6 17.2 L0.6 2.8 C0.6 1.4 1.3 0.6 2.6 0.6Z" fill="none" stroke="#d5d8df" stroke-width="1.2"/><g stroke="#d5d8df" stroke-width="1.9" stroke-linecap="round"><line x1="3.7" y1="12.2" x2="5.6" y2="9"/><line x1="6.6" y1="12.2" x2="8.5" y2="9"/></g><circle cx="10.7" cy="11.8" r="1.05" fill="#d5d8df"/></svg>
<div style="position:absolute;left:50px;top:700px;width:15px;height:15px;border:1px solid #74778e;border-radius:3px;box-sizing:border-box;"></div>
<div style="position:absolute;left:103.6px;top:701.39px;font-size:12.3px;line-height:12.3px;color:#d5d8df;font-weight:400;letter-spacing:0.07px;white-space:nowrap;">Artwork Online Approval (PD + P...</div>
<svg style="position:absolute;left:327.0px;top:697.6px;overflow:visible;" width="17" height="17" viewBox="0 0 17 17"><path d="M6.30 6.30 C 7.30 5.40 7.65 3.70 7.80 2.20 Q 8.50 0.50 9.20 2.20 C 9.35 3.70 9.70 5.40 10.70 6.30 C 11.60 7.30 13.30 7.65 14.80 7.80 Q 16.50 8.50 14.80 9.20 C 13.30 9.35 11.60 9.70 10.70 10.70 C 9.70 11.60 9.35 13.30 9.20 14.80 Q 8.50 16.50 7.80 14.80 C 7.65 13.30 7.30 11.60 6.30 10.70 C 5.40 9.70 3.70 9.35 2.20 9.20 Q 0.50 8.50 2.20 7.80 C 3.70 7.65 5.40 7.30 6.30 6.30Z" fill="none" stroke="#d5d8df" stroke-width="1.3" stroke-linejoin="round"/></svg>
<svg style="position:absolute;left:357.7px;top:698.4px;overflow:visible;" width="16" height="16" viewBox="0 0 16 16"><g fill="none" stroke="#d5d8df" stroke-width="1.35" stroke-linecap="round" stroke-linejoin="round"><path d="M8.4 0.9 C12.4 0.9 15 3.7 15 7.3 C15 10.9 12.3 13.7 8.4 13.7 C7.2 13.7 6.2 13.4 5.2 13 L1.1 14.6 L2.4 11 C1.9 9.9 1.7 8.6 1.7 7.3 C1.7 3.7 4.4 0.9 8.4 0.9Z"/><line x1="8.4" y1="4.4" x2="8.4" y2="10.2"/><line x1="5.5" y1="7.3" x2="11.3" y2="7.3"/></g></svg>
<svg style="position:absolute;left:403.8px;top:695.3px;overflow:visible;" width="22.4" height="22.4" viewBox="0 0 24 24"><defs><clipPath id="cw13"><circle cx="12" cy="12" r="12"/></clipPath></defs><g clip-path="url(#cw13)"><rect width="24" height="24" fill="#9cba8e"/><path d="M3 24 C3.5 19.5 6 17 9.5 16 C12 15.4 15.5 15.5 18.5 16.6 C21 17.6 22 20 22.5 24Z" fill="#d4bb95"/><path d="M15 17 C17 17 18.5 18.5 19 20.5 L15.5 22Z" fill="#e6dcc8"/><path d="M9.6 6.2 C10.6 4.9 13.8 4.8 15.2 6.8 C16.2 8.4 15.8 11 15.2 12.6 L13.6 14.2 C12.8 16.2 12.8 20.2 13.2 24 L8.4 24 C7.8 20.2 7.4 17 7.9 14 C8.4 11 8.5 8 9.6 6.2Z" fill="#5b3222"/><ellipse cx="13" cy="10.6" rx="2.3" ry="3.1" fill="#d9a486"/></g></svg>
<div style="position:absolute;left:440.3px;top:700.70px;font-size:12.4px;line-height:12.4px;color:#d5d8df;font-weight:400;letter-spacing:0px;white-space:nowrap;transform:scaleX(0.9296);transform-origin:0 0;">2 weeks ago</div>
<svg style="position:absolute;left:549.8px;top:695.0px;overflow:visible;" width="24" height="24" viewBox="0 0 24 24"><g fill="none" stroke="#d5d8df" stroke-width="1.2"><circle cx="12" cy="12" r="11.1"/><circle cx="11.6" cy="9.9" r="4.2"/><path d="M4.6 19.7 C6.2 16.8 8.8 15.3 11.7 15.3 C14.6 15.3 17.2 16.8 18.8 19.7"/></g></svg>
<svg style="position:absolute;left:637.7px;top:695.0px;overflow:visible;" width="24" height="24" viewBox="0 0 24 24"><g fill="none" stroke="#d5d8df" stroke-width="1.2"><circle cx="12" cy="12" r="11.1"/><circle cx="11.6" cy="9.9" r="4.2"/><path d="M4.6 19.7 C6.2 16.8 8.8 15.3 11.7 15.3 C14.6 15.3 17.2 16.8 18.8 19.7"/></g></svg>
<svg style="position:absolute;left:725.6px;top:695.0px;overflow:visible;" width="24" height="24" viewBox="0 0 24 24"><g fill="none" stroke="#d5d8df" stroke-width="1.2"><circle cx="12" cy="12" r="11.1"/><circle cx="11.6" cy="9.9" r="4.2"/><path d="M4.6 19.7 C6.2 16.8 8.8 15.3 11.7 15.3 C14.6 15.3 17.2 16.8 18.8 19.7"/></g></svg>
<div style="position:absolute;left:782px;top:691px;width:124px;height:32px;background:#ffd533;"></div>
<div style="position:absolute;left:782px;width:124px;top:700.19px;font-size:12.3px;line-height:12.3px;color:#ffffff;font-weight:400;letter-spacing:0.267px;white-space:nowrap;text-align:center;">Todo</div>
<div style="position:absolute;left:918.4px;top:696.6px;width:145.4px;height:20px;border-radius:3px;background:#133a7f;box-shadow:0 0 0 1px #0d2452;"></div>
<div style="position:absolute;left:926.3px;top:700.39px;font-size:12.3px;line-height:12.3px;color:#d5d8df;font-weight:400;letter-spacing:0.067px;white-space:nowrap;">Packaging Artwork A...</div>
<div style="position:absolute;left:1075px;width:126px;top:700.19px;font-size:12.3px;line-height:12.3px;color:#d5d8df;font-weight:400;letter-spacing:0px;white-space:nowrap;text-align:center;transform:scaleX(0.9530);transform-origin:50% 0;">4 days</div>
<div style="position:absolute;left:1718.4px;top:696.8px;width:96.6px;height:20.5px;border-radius:10.25px;background:#c4c4c4;"></div>
<div style="position:absolute;left:1764px;top:706px;width:4.5px;height:1.2px;background:#f4f4f4;"></div>
<svg style="position:absolute;left:1884.7px;top:696.5px;overflow:visible;" width="15" height="20" viewBox="0 0 15 20"><path d="M2.6 0.6 L9.6 0.6 L14.4 5.6 L14.4 17 C14.4 18.5 13.5 19.4 12 19.4 L2.6 19.4 C1.3 19.4 0.6 18.6 0.6 17.2 L0.6 2.8 C0.6 1.4 1.3 0.6 2.6 0.6Z" fill="none" stroke="#d5d8df" stroke-width="1.2"/><g stroke="#d5d8df" stroke-width="1.9" stroke-linecap="round"><line x1="3.7" y1="12.2" x2="5.6" y2="9"/><line x1="6.6" y1="12.2" x2="8.5" y2="9"/></g><circle cx="10.7" cy="11.8" r="1.05" fill="#d5d8df"/></svg>
<div style="position:absolute;left:50px;top:732px;width:15px;height:15px;border:1px solid #74778e;border-radius:3px;box-sizing:border-box;"></div>
<div style="position:absolute;left:103.6px;top:734.39px;font-size:12.3px;line-height:12.3px;color:#d5d8df;font-weight:400;letter-spacing:-0.044px;white-space:nowrap;">PDF Approval to Packaging Supp...</div>
<svg style="position:absolute;left:327.0px;top:730.1px;overflow:visible;" width="17" height="17" viewBox="0 0 17 17"><path d="M6.30 6.30 C 7.30 5.40 7.65 3.70 7.80 2.20 Q 8.50 0.50 9.20 2.20 C 9.35 3.70 9.70 5.40 10.70 6.30 C 11.60 7.30 13.30 7.65 14.80 7.80 Q 16.50 8.50 14.80 9.20 C 13.30 9.35 11.60 9.70 10.70 10.70 C 9.70 11.60 9.35 13.30 9.20 14.80 Q 8.50 16.50 7.80 14.80 C 7.65 13.30 7.30 11.60 6.30 10.70 C 5.40 9.70 3.70 9.35 2.20 9.20 Q 0.50 8.50 2.20 7.80 C 3.70 7.65 5.40 7.30 6.30 6.30Z" fill="none" stroke="#d5d8df" stroke-width="1.3" stroke-linejoin="round"/></svg>
<svg style="position:absolute;left:357.7px;top:730.9px;overflow:visible;" width="16" height="16" viewBox="0 0 16 16"><g fill="none" stroke="#d5d8df" stroke-width="1.35" stroke-linecap="round" stroke-linejoin="round"><path d="M8.4 0.9 C12.4 0.9 15 3.7 15 7.3 C15 10.9 12.3 13.7 8.4 13.7 C7.2 13.7 6.2 13.4 5.2 13 L1.1 14.6 L2.4 11 C1.9 9.9 1.7 8.6 1.7 7.3 C1.7 3.7 4.4 0.9 8.4 0.9Z"/><line x1="8.4" y1="4.4" x2="8.4" y2="10.2"/><line x1="5.5" y1="7.3" x2="11.3" y2="7.3"/></g></svg>
<svg style="position:absolute;left:403.8px;top:727.8px;overflow:visible;" width="22.4" height="22.4" viewBox="0 0 24 24"><defs><clipPath id="cw14"><circle cx="12" cy="12" r="12"/></clipPath></defs><g clip-path="url(#cw14)"><rect width="24" height="24" fill="#9cba8e"/><path d="M3 24 C3.5 19.5 6 17 9.5 16 C12 15.4 15.5 15.5 18.5 16.6 C21 17.6 22 20 22.5 24Z" fill="#d4bb95"/><path d="M15 17 C17 17 18.5 18.5 19 20.5 L15.5 22Z" fill="#e6dcc8"/><path d="M9.6 6.2 C10.6 4.9 13.8 4.8 15.2 6.8 C16.2 8.4 15.8 11 15.2 12.6 L13.6 14.2 C12.8 16.2 12.8 20.2 13.2 24 L8.4 24 C7.8 20.2 7.4 17 7.9 14 C8.4 11 8.5 8 9.6 6.2Z" fill="#5b3222"/><ellipse cx="13" cy="10.6" rx="2.3" ry="3.1" fill="#d9a486"/></g></svg>
<div style="position:absolute;left:440.3px;top:733.70px;font-size:12.4px;line-height:12.4px;color:#d5d8df;font-weight:400;letter-spacing:0px;white-space:nowrap;transform:scaleX(0.9296);transform-origin:0 0;">2 weeks ago</div>
<svg style="position:absolute;left:549.8px;top:727.5px;overflow:visible;" width="24" height="24" viewBox="0 0 24 24"><g fill="none" stroke="#d5d8df" stroke-width="1.2"><circle cx="12" cy="12" r="11.1"/><circle cx="11.6" cy="9.9" r="4.2"/><path d="M4.6 19.7 C6.2 16.8 8.8 15.3 11.7 15.3 C14.6 15.3 17.2 16.8 18.8 19.7"/></g></svg>
<svg style="position:absolute;left:637.7px;top:727.5px;overflow:visible;" width="24" height="24" viewBox="0 0 24 24"><g fill="none" stroke="#d5d8df" stroke-width="1.2"><circle cx="12" cy="12" r="11.1"/><circle cx="11.6" cy="9.9" r="4.2"/><path d="M4.6 19.7 C6.2 16.8 8.8 15.3 11.7 15.3 C14.6 15.3 17.2 16.8 18.8 19.7"/></g></svg>
<svg style="position:absolute;left:725.6px;top:727.5px;overflow:visible;" width="24" height="24" viewBox="0 0 24 24"><g fill="none" stroke="#d5d8df" stroke-width="1.2"><circle cx="12" cy="12" r="11.1"/><circle cx="11.6" cy="9.9" r="4.2"/><path d="M4.6 19.7 C6.2 16.8 8.8 15.3 11.7 15.3 C14.6 15.3 17.2 16.8 18.8 19.7"/></g></svg>
<div style="position:absolute;left:782px;top:724px;width:124px;height:31px;background:#ffd533;"></div>
<div style="position:absolute;left:782px;width:124px;top:733.19px;font-size:12.3px;line-height:12.3px;color:#ffffff;font-weight:400;letter-spacing:0.267px;white-space:nowrap;text-align:center;">Todo</div>
<div style="position:absolute;left:918.4px;top:729.1px;width:145.4px;height:20px;border-radius:3px;background:#133a7f;box-shadow:0 0 0 1px #0d2452;"></div>
<div style="position:absolute;left:926.3px;top:733.39px;font-size:12.3px;line-height:12.3px;color:#d5d8df;font-weight:400;letter-spacing:0.067px;white-space:nowrap;">Packaging Artwork A...</div>
<div style="position:absolute;left:1075px;width:126px;top:733.19px;font-size:12.3px;line-height:12.3px;color:#d5d8df;font-weight:400;letter-spacing:0px;white-space:nowrap;text-align:center;transform:scaleX(0.9530);transform-origin:50% 0;">2 days</div>
<div style="position:absolute;left:1718.4px;top:729.3px;width:96.6px;height:20.5px;border-radius:10.25px;background:#c4c4c4;"></div>
<div style="position:absolute;left:1764px;top:739px;width:4.5px;height:1.2px;background:#f4f4f4;"></div>
<svg style="position:absolute;left:1884.7px;top:729.0px;overflow:visible;" width="15" height="20" viewBox="0 0 15 20"><path d="M2.6 0.6 L9.6 0.6 L14.4 5.6 L14.4 17 C14.4 18.5 13.5 19.4 12 19.4 L2.6 19.4 C1.3 19.4 0.6 18.6 0.6 17.2 L0.6 2.8 C0.6 1.4 1.3 0.6 2.6 0.6Z" fill="none" stroke="#d5d8df" stroke-width="1.2"/><g stroke="#d5d8df" stroke-width="1.9" stroke-linecap="round"><line x1="3.7" y1="12.2" x2="5.6" y2="9"/><line x1="6.6" y1="12.2" x2="8.5" y2="9"/></g><circle cx="10.7" cy="11.8" r="1.05" fill="#d5d8df"/></svg>
<div style="position:absolute;left:50px;top:764px;width:15px;height:15px;border:1px solid #74778e;border-radius:3px;box-sizing:border-box;"></div>
<div style="position:absolute;left:103.6px;top:766.39px;font-size:12.3px;line-height:12.3px;color:#d5d8df;font-weight:400;letter-spacing:0.061px;white-space:nowrap;">Digital Proof (printed PDF only fo...</div>
<svg style="position:absolute;left:327.0px;top:762.1px;overflow:visible;" width="17" height="17" viewBox="0 0 17 17"><path d="M6.30 6.30 C 7.30 5.40 7.65 3.70 7.80 2.20 Q 8.50 0.50 9.20 2.20 C 9.35 3.70 9.70 5.40 10.70 6.30 C 11.60 7.30 13.30 7.65 14.80 7.80 Q 16.50 8.50 14.80 9.20 C 13.30 9.35 11.60 9.70 10.70 10.70 C 9.70 11.60 9.35 13.30 9.20 14.80 Q 8.50 16.50 7.80 14.80 C 7.65 13.30 7.30 11.60 6.30 10.70 C 5.40 9.70 3.70 9.35 2.20 9.20 Q 0.50 8.50 2.20 7.80 C 3.70 7.65 5.40 7.30 6.30 6.30Z" fill="none" stroke="#d5d8df" stroke-width="1.3" stroke-linejoin="round"/></svg>
<svg style="position:absolute;left:357.7px;top:762.9px;overflow:visible;" width="16" height="16" viewBox="0 0 16 16"><g fill="none" stroke="#d5d8df" stroke-width="1.35" stroke-linecap="round" stroke-linejoin="round"><path d="M8.4 0.9 C12.4 0.9 15 3.7 15 7.3 C15 10.9 12.3 13.7 8.4 13.7 C7.2 13.7 6.2 13.4 5.2 13 L1.1 14.6 L2.4 11 C1.9 9.9 1.7 8.6 1.7 7.3 C1.7 3.7 4.4 0.9 8.4 0.9Z"/><line x1="8.4" y1="4.4" x2="8.4" y2="10.2"/><line x1="5.5" y1="7.3" x2="11.3" y2="7.3"/></g></svg>
<svg style="position:absolute;left:403.8px;top:759.8px;overflow:visible;" width="22.4" height="22.4" viewBox="0 0 24 24"><defs><clipPath id="cw15"><circle cx="12" cy="12" r="12"/></clipPath></defs><g clip-path="url(#cw15)"><rect width="24" height="24" fill="#9cba8e"/><path d="M3 24 C3.5 19.5 6 17 9.5 16 C12 15.4 15.5 15.5 18.5 16.6 C21 17.6 22 20 22.5 24Z" fill="#d4bb95"/><path d="M15 17 C17 17 18.5 18.5 19 20.5 L15.5 22Z" fill="#e6dcc8"/><path d="M9.6 6.2 C10.6 4.9 13.8 4.8 15.2 6.8 C16.2 8.4 15.8 11 15.2 12.6 L13.6 14.2 C12.8 16.2 12.8 20.2 13.2 24 L8.4 24 C7.8 20.2 7.4 17 7.9 14 C8.4 11 8.5 8 9.6 6.2Z" fill="#5b3222"/><ellipse cx="13" cy="10.6" rx="2.3" ry="3.1" fill="#d9a486"/></g></svg>
<div style="position:absolute;left:440.3px;top:765.70px;font-size:12.4px;line-height:12.4px;color:#d5d8df;font-weight:400;letter-spacing:0px;white-space:nowrap;transform:scaleX(0.9296);transform-origin:0 0;">2 weeks ago</div>
<svg style="position:absolute;left:549.8px;top:759.5px;overflow:visible;" width="24" height="24" viewBox="0 0 24 24"><g fill="none" stroke="#d5d8df" stroke-width="1.2"><circle cx="12" cy="12" r="11.1"/><circle cx="11.6" cy="9.9" r="4.2"/><path d="M4.6 19.7 C6.2 16.8 8.8 15.3 11.7 15.3 C14.6 15.3 17.2 16.8 18.8 19.7"/></g></svg>
<svg style="position:absolute;left:637.7px;top:759.5px;overflow:visible;" width="24" height="24" viewBox="0 0 24 24"><g fill="none" stroke="#d5d8df" stroke-width="1.2"><circle cx="12" cy="12" r="11.1"/><circle cx="11.6" cy="9.9" r="4.2"/><path d="M4.6 19.7 C6.2 16.8 8.8 15.3 11.7 15.3 C14.6 15.3 17.2 16.8 18.8 19.7"/></g></svg>
<svg style="position:absolute;left:725.6px;top:759.5px;overflow:visible;" width="24" height="24" viewBox="0 0 24 24"><g fill="none" stroke="#d5d8df" stroke-width="1.2"><circle cx="12" cy="12" r="11.1"/><circle cx="11.6" cy="9.9" r="4.2"/><path d="M4.6 19.7 C6.2 16.8 8.8 15.3 11.7 15.3 C14.6 15.3 17.2 16.8 18.8 19.7"/></g></svg>
<div style="position:absolute;left:782px;top:756px;width:124px;height:31px;background:#ffd533;"></div>
<div style="position:absolute;left:782px;width:124px;top:765.19px;font-size:12.3px;line-height:12.3px;color:#ffffff;font-weight:400;letter-spacing:0.267px;white-space:nowrap;text-align:center;">Todo</div>
<div style="position:absolute;left:918.4px;top:761.1px;width:145.4px;height:20px;border-radius:3px;background:#133a7f;box-shadow:0 0 0 1px #0d2452;"></div>
<div style="position:absolute;left:926.3px;top:765.39px;font-size:12.3px;line-height:12.3px;color:#d5d8df;font-weight:400;letter-spacing:-0.095px;white-space:nowrap;">PDF Approval to Pack...</div>
<div style="position:absolute;left:1075px;width:126px;top:765.19px;font-size:12.3px;line-height:12.3px;color:#d5d8df;font-weight:400;letter-spacing:0px;white-space:nowrap;text-align:center;transform:scaleX(0.9530);transform-origin:50% 0;">2 days</div>
<div style="position:absolute;left:1718.4px;top:761.3px;width:96.6px;height:20.5px;border-radius:10.25px;background:#c4c4c4;"></div>
<div style="position:absolute;left:1764px;top:771px;width:4.5px;height:1.2px;background:#f4f4f4;"></div>
<svg style="position:absolute;left:1884.7px;top:761.0px;overflow:visible;" width="15" height="20" viewBox="0 0 15 20"><path d="M2.6 0.6 L9.6 0.6 L14.4 5.6 L14.4 17 C14.4 18.5 13.5 19.4 12 19.4 L2.6 19.4 C1.3 19.4 0.6 18.6 0.6 17.2 L0.6 2.8 C0.6 1.4 1.3 0.6 2.6 0.6Z" fill="none" stroke="#d5d8df" stroke-width="1.2"/><g stroke="#d5d8df" stroke-width="1.9" stroke-linecap="round"><line x1="3.7" y1="12.2" x2="5.6" y2="9"/><line x1="6.6" y1="12.2" x2="8.5" y2="9"/></g><circle cx="10.7" cy="11.8" r="1.05" fill="#d5d8df"/></svg>
<div style="position:absolute;left:50px;top:796px;width:15px;height:15px;border:1px solid #74778e;border-radius:3px;box-sizing:border-box;"></div>
<div style="position:absolute;left:103.6px;top:798.39px;font-size:12.3px;line-height:12.3px;color:#d5d8df;font-weight:400;letter-spacing:0.065px;white-space:nowrap;">Color Proof / Proof on The Spot ...</div>
<svg style="position:absolute;left:327.0px;top:794.6px;overflow:visible;" width="17" height="17" viewBox="0 0 17 17"><path d="M6.30 6.30 C 7.30 5.40 7.65 3.70 7.80 2.20 Q 8.50 0.50 9.20 2.20 C 9.35 3.70 9.70 5.40 10.70 6.30 C 11.60 7.30 13.30 7.65 14.80 7.80 Q 16.50 8.50 14.80 9.20 C 13.30 9.35 11.60 9.70 10.70 10.70 C 9.70 11.60 9.35 13.30 9.20 14.80 Q 8.50 16.50 7.80 14.80 C 7.65 13.30 7.30 11.60 6.30 10.70 C 5.40 9.70 3.70 9.35 2.20 9.20 Q 0.50 8.50 2.20 7.80 C 3.70 7.65 5.40 7.30 6.30 6.30Z" fill="none" stroke="#d5d8df" stroke-width="1.3" stroke-linejoin="round"/></svg>
<svg style="position:absolute;left:357.7px;top:795.4px;overflow:visible;" width="16" height="16" viewBox="0 0 16 16"><g fill="none" stroke="#d5d8df" stroke-width="1.35" stroke-linecap="round" stroke-linejoin="round"><path d="M8.4 0.9 C12.4 0.9 15 3.7 15 7.3 C15 10.9 12.3 13.7 8.4 13.7 C7.2 13.7 6.2 13.4 5.2 13 L1.1 14.6 L2.4 11 C1.9 9.9 1.7 8.6 1.7 7.3 C1.7 3.7 4.4 0.9 8.4 0.9Z"/><line x1="8.4" y1="4.4" x2="8.4" y2="10.2"/><line x1="5.5" y1="7.3" x2="11.3" y2="7.3"/></g></svg>
<svg style="position:absolute;left:403.8px;top:792.3px;overflow:visible;" width="22.4" height="22.4" viewBox="0 0 24 24"><defs><clipPath id="cw16"><circle cx="12" cy="12" r="12"/></clipPath></defs><g clip-path="url(#cw16)"><rect width="24" height="24" fill="#9cba8e"/><path d="M3 24 C3.5 19.5 6 17 9.5 16 C12 15.4 15.5 15.5 18.5 16.6 C21 17.6 22 20 22.5 24Z" fill="#d4bb95"/><path d="M15 17 C17 17 18.5 18.5 19 20.5 L15.5 22Z" fill="#e6dcc8"/><path d="M9.6 6.2 C10.6 4.9 13.8 4.8 15.2 6.8 C16.2 8.4 15.8 11 15.2 12.6 L13.6 14.2 C12.8 16.2 12.8 20.2 13.2 24 L8.4 24 C7.8 20.2 7.4 17 7.9 14 C8.4 11 8.5 8 9.6 6.2Z" fill="#5b3222"/><ellipse cx="13" cy="10.6" rx="2.3" ry="3.1" fill="#d9a486"/></g></svg>
<div style="position:absolute;left:440.3px;top:797.70px;font-size:12.4px;line-height:12.4px;color:#d5d8df;font-weight:400;letter-spacing:0px;white-space:nowrap;transform:scaleX(0.9296);transform-origin:0 0;">2 weeks ago</div>
<svg style="position:absolute;left:549.8px;top:792.0px;overflow:visible;" width="24" height="24" viewBox="0 0 24 24"><g fill="none" stroke="#d5d8df" stroke-width="1.2"><circle cx="12" cy="12" r="11.1"/><circle cx="11.6" cy="9.9" r="4.2"/><path d="M4.6 19.7 C6.2 16.8 8.8 15.3 11.7 15.3 C14.6 15.3 17.2 16.8 18.8 19.7"/></g></svg>
<svg style="position:absolute;left:637.7px;top:792.0px;overflow:visible;" width="24" height="24" viewBox="0 0 24 24"><g fill="none" stroke="#d5d8df" stroke-width="1.2"><circle cx="12" cy="12" r="11.1"/><circle cx="11.6" cy="9.9" r="4.2"/><path d="M4.6 19.7 C6.2 16.8 8.8 15.3 11.7 15.3 C14.6 15.3 17.2 16.8 18.8 19.7"/></g></svg>
<svg style="position:absolute;left:725.6px;top:792.0px;overflow:visible;" width="24" height="24" viewBox="0 0 24 24"><g fill="none" stroke="#d5d8df" stroke-width="1.2"><circle cx="12" cy="12" r="11.1"/><circle cx="11.6" cy="9.9" r="4.2"/><path d="M4.6 19.7 C6.2 16.8 8.8 15.3 11.7 15.3 C14.6 15.3 17.2 16.8 18.8 19.7"/></g></svg>
<div style="position:absolute;left:782px;top:788px;width:124px;height:32px;background:#ffd533;"></div>
<div style="position:absolute;left:782px;width:124px;top:797.19px;font-size:12.3px;line-height:12.3px;color:#ffffff;font-weight:400;letter-spacing:0.267px;white-space:nowrap;text-align:center;">Todo</div>
<div style="position:absolute;left:918.4px;top:793.6px;width:145.4px;height:20px;border-radius:3px;background:#133a7f;box-shadow:0 0 0 1px #0d2452;"></div>
<div style="position:absolute;left:926.3px;top:797.39px;font-size:12.3px;line-height:12.3px;color:#d5d8df;font-weight:400;letter-spacing:0.088px;white-space:nowrap;">Digital Proof (printed ...</div>
<div style="position:absolute;left:1075px;width:126px;top:797.19px;font-size:12.3px;line-height:12.3px;color:#d5d8df;font-weight:400;letter-spacing:0px;white-space:nowrap;text-align:center;transform:scaleX(0.9530);transform-origin:50% 0;">1 days</div>
<div style="position:absolute;left:1718.4px;top:793.8px;width:96.6px;height:20.5px;border-radius:10.25px;background:#c4c4c4;"></div>
<div style="position:absolute;left:1764px;top:804px;width:4.5px;height:1.2px;background:#f4f4f4;"></div>
<svg style="position:absolute;left:1884.7px;top:793.5px;overflow:visible;" width="15" height="20" viewBox="0 0 15 20"><path d="M2.6 0.6 L9.6 0.6 L14.4 5.6 L14.4 17 C14.4 18.5 13.5 19.4 12 19.4 L2.6 19.4 C1.3 19.4 0.6 18.6 0.6 17.2 L0.6 2.8 C0.6 1.4 1.3 0.6 2.6 0.6Z" fill="none" stroke="#d5d8df" stroke-width="1.2"/><g stroke="#d5d8df" stroke-width="1.9" stroke-linecap="round"><line x1="3.7" y1="12.2" x2="5.6" y2="9"/><line x1="6.6" y1="12.2" x2="8.5" y2="9"/></g><circle cx="10.7" cy="11.8" r="1.05" fill="#d5d8df"/></svg>
<div style="position:absolute;left:50px;top:829px;width:15px;height:15px;border:1px solid #74778e;border-radius:3px;box-sizing:border-box;"></div>
<svg style="position:absolute;left:82px;top:830.8px;overflow:visible;" width="8" height="12" viewBox="0 0 8 12"><polyline points="1.5,1.2 6,6 1.5,10.8" fill="none" stroke="#d5d8df" stroke-width="1.4"/></svg>
<div style="position:absolute;left:103.6px;top:831.39px;font-size:12.3px;line-height:12.3px;color:#d5d8df;font-weight:400;letter-spacing:0.073px;white-space:nowrap;">HACCP Validation (only for n...</div>
<div style="position:absolute;left:285.7px;top:830.1px;height:13px;width:13px;border-radius:3px;background:#3e4160;color:#d5d8df;font-size:11px;line-height:13px;text-align:center;">2</div>
<svg style="position:absolute;left:327.0px;top:827.1px;overflow:visible;" width="17" height="17" viewBox="0 0 17 17"><path d="M6.30 6.30 C 7.30 5.40 7.65 3.70 7.80 2.20 Q 8.50 0.50 9.20 2.20 C 9.35 3.70 9.70 5.40 10.70 6.30 C 11.60 7.30 13.30 7.65 14.80 7.80 Q 16.50 8.50 14.80 9.20 C 13.30 9.35 11.60 9.70 10.70 10.70 C 9.70 11.60 9.35 13.30 9.20 14.80 Q 8.50 16.50 7.80 14.80 C 7.65 13.30 7.30 11.60 6.30 10.70 C 5.40 9.70 3.70 9.35 2.20 9.20 Q 0.50 8.50 2.20 7.80 C 3.70 7.65 5.40 7.30 6.30 6.30Z" fill="none" stroke="#d5d8df" stroke-width="1.3" stroke-linejoin="round"/></svg>
<svg style="position:absolute;left:357.7px;top:827.9px;overflow:visible;" width="16" height="16" viewBox="0 0 16 16"><g fill="none" stroke="#d5d8df" stroke-width="1.35" stroke-linecap="round" stroke-linejoin="round"><path d="M8.4 0.9 C12.4 0.9 15 3.7 15 7.3 C15 10.9 12.3 13.7 8.4 13.7 C7.2 13.7 6.2 13.4 5.2 13 L1.1 14.6 L2.4 11 C1.9 9.9 1.7 8.6 1.7 7.3 C1.7 3.7 4.4 0.9 8.4 0.9Z"/><line x1="8.4" y1="4.4" x2="8.4" y2="10.2"/><line x1="5.5" y1="7.3" x2="11.3" y2="7.3"/></g></svg>
<svg style="position:absolute;left:403.8px;top:824.8px;overflow:visible;" width="22.4" height="22.4" viewBox="0 0 24 24"><defs><clipPath id="cw17"><circle cx="12" cy="12" r="12"/></clipPath></defs><g clip-path="url(#cw17)"><rect width="24" height="24" fill="#9cba8e"/><path d="M3 24 C3.5 19.5 6 17 9.5 16 C12 15.4 15.5 15.5 18.5 16.6 C21 17.6 22 20 22.5 24Z" fill="#d4bb95"/><path d="M15 17 C17 17 18.5 18.5 19 20.5 L15.5 22Z" fill="#e6dcc8"/><path d="M9.6 6.2 C10.6 4.9 13.8 4.8 15.2 6.8 C16.2 8.4 15.8 11 15.2 12.6 L13.6 14.2 C12.8 16.2 12.8 20.2 13.2 24 L8.4 24 C7.8 20.2 7.4 17 7.9 14 C8.4 11 8.5 8 9.6 6.2Z" fill="#5b3222"/><ellipse cx="13" cy="10.6" rx="2.3" ry="3.1" fill="#d9a486"/></g></svg>
<div style="position:absolute;left:440.3px;top:830.70px;font-size:12.4px;line-height:12.4px;color:#d5d8df;font-weight:400;letter-spacing:0px;white-space:nowrap;transform:scaleX(0.9296);transform-origin:0 0;">2 weeks ago</div>
<svg style="position:absolute;left:549.8px;top:824.5px;overflow:visible;" width="24" height="24" viewBox="0 0 24 24"><g fill="none" stroke="#d5d8df" stroke-width="1.2"><circle cx="12" cy="12" r="11.1"/><circle cx="11.6" cy="9.9" r="4.2"/><path d="M4.6 19.7 C6.2 16.8 8.8 15.3 11.7 15.3 C14.6 15.3 17.2 16.8 18.8 19.7"/></g></svg>
<svg style="position:absolute;left:637.7px;top:824.5px;overflow:visible;" width="24" height="24" viewBox="0 0 24 24"><g fill="none" stroke="#d5d8df" stroke-width="1.2"><circle cx="12" cy="12" r="11.1"/><circle cx="11.6" cy="9.9" r="4.2"/><path d="M4.6 19.7 C6.2 16.8 8.8 15.3 11.7 15.3 C14.6 15.3 17.2 16.8 18.8 19.7"/></g></svg>
<svg style="position:absolute;left:725.6px;top:824.5px;overflow:visible;" width="24" height="24" viewBox="0 0 24 24"><g fill="none" stroke="#d5d8df" stroke-width="1.2"><circle cx="12" cy="12" r="11.1"/><circle cx="11.6" cy="9.9" r="4.2"/><path d="M4.6 19.7 C6.2 16.8 8.8 15.3 11.7 15.3 C14.6 15.3 17.2 16.8 18.8 19.7"/></g></svg>
<div style="position:absolute;left:782px;top:821px;width:124px;height:31px;background:#ffd533;"></div>
<div style="position:absolute;left:782px;width:124px;top:830.19px;font-size:12.3px;line-height:12.3px;color:#ffffff;font-weight:400;letter-spacing:0.267px;white-space:nowrap;text-align:center;">Todo</div>
<div style="position:absolute;left:1075px;width:126px;top:830.19px;font-size:12.3px;line-height:12.3px;color:#d5d8df;font-weight:400;letter-spacing:0px;white-space:nowrap;text-align:center;transform:scaleX(0.9530);transform-origin:50% 0;">5 days</div>
<div style="position:absolute;left:1718.4px;top:826.3px;width:96.6px;height:20.5px;border-radius:10.25px;background:#c4c4c4;"></div>
<div style="position:absolute;left:1764px;top:836px;width:4.5px;height:1.2px;background:#f4f4f4;"></div>
<svg style="position:absolute;left:1884.7px;top:826.0px;overflow:visible;" width="15" height="20" viewBox="0 0 15 20"><path d="M2.6 0.6 L9.6 0.6 L14.4 5.6 L14.4 17 C14.4 18.5 13.5 19.4 12 19.4 L2.6 19.4 C1.3 19.4 0.6 18.6 0.6 17.2 L0.6 2.8 C0.6 1.4 1.3 0.6 2.6 0.6Z" fill="none" stroke="#d5d8df" stroke-width="1.2"/><g stroke="#d5d8df" stroke-width="1.9" stroke-linecap="round"><line x1="3.7" y1="12.2" x2="5.6" y2="9"/><line x1="6.6" y1="12.2" x2="8.5" y2="9"/></g><circle cx="10.7" cy="11.8" r="1.05" fill="#d5d8df"/></svg>
<div style="position:absolute;left:50px;top:861px;width:15px;height:15px;border:1px solid #74778e;border-radius:3px;box-sizing:border-box;"></div>
<div style="position:absolute;left:103.6px;top:863.39px;font-size:12.3px;line-height:12.3px;color:#d5d8df;font-weight:400;letter-spacing:-0.048px;white-space:nowrap;">Packaging - Line Trial</div>
<svg style="position:absolute;left:327.0px;top:859.1px;overflow:visible;" width="17" height="17" viewBox="0 0 17 17"><path d="M6.30 6.30 C 7.30 5.40 7.65 3.70 7.80 2.20 Q 8.50 0.50 9.20 2.20 C 9.35 3.70 9.70 5.40 10.70 6.30 C 11.60 7.30 13.30 7.65 14.80 7.80 Q 16.50 8.50 14.80 9.20 C 13.30 9.35 11.60 9.70 10.70 10.70 C 9.70 11.60 9.35 13.30 9.20 14.80 Q 8.50 16.50 7.80 14.80 C 7.65 13.30 7.30 11.60 6.30 10.70 C 5.40 9.70 3.70 9.35 2.20 9.20 Q 0.50 8.50 2.20 7.80 C 3.70 7.65 5.40 7.30 6.30 6.30Z" fill="none" stroke="#d5d8df" stroke-width="1.3" stroke-linejoin="round"/></svg>
<svg style="position:absolute;left:357.7px;top:859.9px;overflow:visible;" width="16" height="16" viewBox="0 0 16 16"><g fill="none" stroke="#d5d8df" stroke-width="1.35" stroke-linecap="round" stroke-linejoin="round"><path d="M8.4 0.9 C12.4 0.9 15 3.7 15 7.3 C15 10.9 12.3 13.7 8.4 13.7 C7.2 13.7 6.2 13.4 5.2 13 L1.1 14.6 L2.4 11 C1.9 9.9 1.7 8.6 1.7 7.3 C1.7 3.7 4.4 0.9 8.4 0.9Z"/><line x1="8.4" y1="4.4" x2="8.4" y2="10.2"/><line x1="5.5" y1="7.3" x2="11.3" y2="7.3"/></g></svg>
<svg style="position:absolute;left:403.8px;top:856.8px;overflow:visible;" width="22.4" height="22.4" viewBox="0 0 24 24"><defs><clipPath id="cw18"><circle cx="12" cy="12" r="12"/></clipPath></defs><g clip-path="url(#cw18)"><rect width="24" height="24" fill="#9cba8e"/><path d="M3 24 C3.5 19.5 6 17 9.5 16 C12 15.4 15.5 15.5 18.5 16.6 C21 17.6 22 20 22.5 24Z" fill="#d4bb95"/><path d="M15 17 C17 17 18.5 18.5 19 20.5 L15.5 22Z" fill="#e6dcc8"/><path d="M9.6 6.2 C10.6 4.9 13.8 4.8 15.2 6.8 C16.2 8.4 15.8 11 15.2 12.6 L13.6 14.2 C12.8 16.2 12.8 20.2 13.2 24 L8.4 24 C7.8 20.2 7.4 17 7.9 14 C8.4 11 8.5 8 9.6 6.2Z" fill="#5b3222"/><ellipse cx="13" cy="10.6" rx="2.3" ry="3.1" fill="#d9a486"/></g></svg>
<div style="position:absolute;left:440.3px;top:862.70px;font-size:12.4px;line-height:12.4px;color:#d5d8df;font-weight:400;letter-spacing:0px;white-space:nowrap;transform:scaleX(0.9296);transform-origin:0 0;">2 weeks ago</div>
<svg style="position:absolute;left:549.8px;top:856.5px;overflow:visible;" width="24" height="24" viewBox="0 0 24 24"><g fill="none" stroke="#d5d8df" stroke-width="1.2"><circle cx="12" cy="12" r="11.1"/><circle cx="11.6" cy="9.9" r="4.2"/><path d="M4.6 19.7 C6.2 16.8 8.8 15.3 11.7 15.3 C14.6 15.3 17.2 16.8 18.8 19.7"/></g></svg>
<svg style="position:absolute;left:637.7px;top:856.5px;overflow:visible;" width="24" height="24" viewBox="0 0 24 24"><g fill="none" stroke="#d5d8df" stroke-width="1.2"><circle cx="12" cy="12" r="11.1"/><circle cx="11.6" cy="9.9" r="4.2"/><path d="M4.6 19.7 C6.2 16.8 8.8 15.3 11.7 15.3 C14.6 15.3 17.2 16.8 18.8 19.7"/></g></svg>
<svg style="position:absolute;left:725.6px;top:856.5px;overflow:visible;" width="24" height="24" viewBox="0 0 24 24"><g fill="none" stroke="#d5d8df" stroke-width="1.2"><circle cx="12" cy="12" r="11.1"/><circle cx="11.6" cy="9.9" r="4.2"/><path d="M4.6 19.7 C6.2 16.8 8.8 15.3 11.7 15.3 C14.6 15.3 17.2 16.8 18.8 19.7"/></g></svg>
<div style="position:absolute;left:782px;top:853px;width:124px;height:31px;background:#ffd533;"></div>
<div style="position:absolute;left:782px;width:124px;top:862.19px;font-size:12.3px;line-height:12.3px;color:#ffffff;font-weight:400;letter-spacing:0.267px;white-space:nowrap;text-align:center;">Todo</div>
<div style="position:absolute;left:1075px;width:126px;top:862.19px;font-size:12.3px;line-height:12.3px;color:#d5d8df;font-weight:400;letter-spacing:0px;white-space:nowrap;text-align:center;transform:scaleX(0.9530);transform-origin:50% 0;">2 days</div>
<div style="position:absolute;left:1718.4px;top:858.3px;width:96.6px;height:20.5px;border-radius:10.25px;background:#c4c4c4;"></div>
<div style="position:absolute;left:1764px;top:868px;width:4.5px;height:1.2px;background:#f4f4f4;"></div>
<svg style="position:absolute;left:1884.7px;top:858.0px;overflow:visible;" width="15" height="20" viewBox="0 0 15 20"><path d="M2.6 0.6 L9.6 0.6 L14.4 5.6 L14.4 17 C14.4 18.5 13.5 19.4 12 19.4 L2.6 19.4 C1.3 19.4 0.6 18.6 0.6 17.2 L0.6 2.8 C0.6 1.4 1.3 0.6 2.6 0.6Z" fill="none" stroke="#d5d8df" stroke-width="1.2"/><g stroke="#d5d8df" stroke-width="1.9" stroke-linecap="round"><line x1="3.7" y1="12.2" x2="5.6" y2="9"/><line x1="6.6" y1="12.2" x2="8.5" y2="9"/></g><circle cx="10.7" cy="11.8" r="1.05" fill="#d5d8df"/></svg>
<div style="position:absolute;left:50px;top:894px;width:15px;height:15px;border:1px solid #74778e;border-radius:3px;box-sizing:border-box;"></div>
<div style="position:absolute;left:103.6px;top:895.39px;font-size:12.3px;line-height:12.3px;color:#d5d8df;font-weight:400;letter-spacing:0.208px;white-space:nowrap;">Stacking Test</div>
<svg style="position:absolute;left:327.0px;top:891.6px;overflow:visible;" width="17" height="17" viewBox="0 0 17 17"><path d="M6.30 6.30 C 7.30 5.40 7.65 3.70 7.80 2.20 Q 8.50 0.50 9.20 2.20 C 9.35 3.70 9.70 5.40 10.70 6.30 C 11.60 7.30 13.30 7.65 14.80 7.80 Q 16.50 8.50 14.80 9.20 C 13.30 9.35 11.60 9.70 10.70 10.70 C 9.70 11.60 9.35 13.30 9.20 14.80 Q 8.50 16.50 7.80 14.80 C 7.65 13.30 7.30 11.60 6.30 10.70 C 5.40 9.70 3.70 9.35 2.20 9.20 Q 0.50 8.50 2.20 7.80 C 3.70 7.65 5.40 7.30 6.30 6.30Z" fill="none" stroke="#d5d8df" stroke-width="1.3" stroke-linejoin="round"/></svg>
<svg style="position:absolute;left:357.7px;top:892.4px;overflow:visible;" width="16" height="16" viewBox="0 0 16 16"><g fill="none" stroke="#d5d8df" stroke-width="1.35" stroke-linecap="round" stroke-linejoin="round"><path d="M8.4 0.9 C12.4 0.9 15 3.7 15 7.3 C15 10.9 12.3 13.7 8.4 13.7 C7.2 13.7 6.2 13.4 5.2 13 L1.1 14.6 L2.4 11 C1.9 9.9 1.7 8.6 1.7 7.3 C1.7 3.7 4.4 0.9 8.4 0.9Z"/><line x1="8.4" y1="4.4" x2="8.4" y2="10.2"/><line x1="5.5" y1="7.3" x2="11.3" y2="7.3"/></g></svg>
<svg style="position:absolute;left:403.8px;top:889.3px;overflow:visible;" width="22.4" height="22.4" viewBox="0 0 24 24"><defs><clipPath id="cw19"><circle cx="12" cy="12" r="12"/></clipPath></defs><g clip-path="url(#cw19)"><rect width="24" height="24" fill="#9cba8e"/><path d="M3 24 C3.5 19.5 6 17 9.5 16 C12 15.4 15.5 15.5 18.5 16.6 C21 17.6 22 20 22.5 24Z" fill="#d4bb95"/><path d="M15 17 C17 17 18.5 18.5 19 20.5 L15.5 22Z" fill="#e6dcc8"/><path d="M9.6 6.2 C10.6 4.9 13.8 4.8 15.2 6.8 C16.2 8.4 15.8 11 15.2 12.6 L13.6 14.2 C12.8 16.2 12.8 20.2 13.2 24 L8.4 24 C7.8 20.2 7.4 17 7.9 14 C8.4 11 8.5 8 9.6 6.2Z" fill="#5b3222"/><ellipse cx="13" cy="10.6" rx="2.3" ry="3.1" fill="#d9a486"/></g></svg>
<div style="position:absolute;left:440.3px;top:894.70px;font-size:12.4px;line-height:12.4px;color:#d5d8df;font-weight:400;letter-spacing:0px;white-space:nowrap;transform:scaleX(0.9296);transform-origin:0 0;">2 weeks ago</div>
<svg style="position:absolute;left:549.8px;top:889.0px;overflow:visible;" width="24" height="24" viewBox="0 0 24 24"><g fill="none" stroke="#d5d8df" stroke-width="1.2"><circle cx="12" cy="12" r="11.1"/><circle cx="11.6" cy="9.9" r="4.2"/><path d="M4.6 19.7 C6.2 16.8 8.8 15.3 11.7 15.3 C14.6 15.3 17.2 16.8 18.8 19.7"/></g></svg>
<svg style="position:absolute;left:637.7px;top:889.0px;overflow:visible;" width="24" height="24" viewBox="0 0 24 24"><g fill="none" stroke="#d5d8df" stroke-width="1.2"><circle cx="12" cy="12" r="11.1"/><circle cx="11.6" cy="9.9" r="4.2"/><path d="M4.6 19.7 C6.2 16.8 8.8 15.3 11.7 15.3 C14.6 15.3 17.2 16.8 18.8 19.7"/></g></svg>
<svg style="position:absolute;left:725.6px;top:889.0px;overflow:visible;" width="24" height="24" viewBox="0 0 24 24"><g fill="none" stroke="#d5d8df" stroke-width="1.2"><circle cx="12" cy="12" r="11.1"/><circle cx="11.6" cy="9.9" r="4.2"/><path d="M4.6 19.7 C6.2 16.8 8.8 15.3 11.7 15.3 C14.6 15.3 17.2 16.8 18.8 19.7"/></g></svg>
<div style="position:absolute;left:782px;top:885px;width:124px;height:32px;background:#ffd533;"></div>
<div style="position:absolute;left:782px;width:124px;top:894.19px;font-size:12.3px;line-height:12.3px;color:#ffffff;font-weight:400;letter-spacing:0.267px;white-space:nowrap;text-align:center;">Todo</div>
<div style="position:absolute;left:1075px;width:126px;top:894.19px;font-size:12.3px;line-height:12.3px;color:#d5d8df;font-weight:400;letter-spacing:0px;white-space:nowrap;text-align:center;transform:scaleX(0.9530);transform-origin:50% 0;">5 days</div>
<div style="position:absolute;left:1718.4px;top:890.8px;width:96.6px;height:20.5px;border-radius:10.25px;background:#c4c4c4;"></div>
<div style="position:absolute;left:1764px;top:900px;width:4.5px;height:1.2px;background:#f4f4f4;"></div>
<svg style="position:absolute;left:1884.7px;top:890.5px;overflow:visible;" width="15" height="20" viewBox="0 0 15 20"><path d="M2.6 0.6 L9.6 0.6 L14.4 5.6 L14.4 17 C14.4 18.5 13.5 19.4 12 19.4 L2.6 19.4 C1.3 19.4 0.6 18.6 0.6 17.2 L0.6 2.8 C0.6 1.4 1.3 0.6 2.6 0.6Z" fill="none" stroke="#d5d8df" stroke-width="1.2"/><g stroke="#d5d8df" stroke-width="1.9" stroke-linecap="round"><line x1="3.7" y1="12.2" x2="5.6" y2="9"/><line x1="6.6" y1="12.2" x2="8.5" y2="9"/></g><circle cx="10.7" cy="11.8" r="1.05" fill="#d5d8df"/></svg>
<div style="position:absolute;left:50px;top:926px;width:15px;height:15px;border:1px solid #74778e;border-radius:3px;box-sizing:border-box;"></div>
<div style="position:absolute;left:103.6px;top:928.39px;font-size:12.3px;line-height:12.3px;color:#d5d8df;font-weight:400;letter-spacing:0.2px;white-space:nowrap;">Transportation Test</div>
<svg style="position:absolute;left:327.0px;top:924.1px;overflow:visible;" width="17" height="17" viewBox="0 0 17 17"><path d="M6.30 6.30 C 7.30 5.40 7.65 3.70 7.80 2.20 Q 8.50 0.50 9.20 2.20 C 9.35 3.70 9.70 5.40 10.70 6.30 C 11.60 7.30 13.30 7.65 14.80 7.80 Q 16.50 8.50 14.80 9.20 C 13.30 9.35 11.60 9.70 10.70 10.70 C 9.70 11.60 9.35 13.30 9.20 14.80 Q 8.50 16.50 7.80 14.80 C 7.65 13.30 7.30 11.60 6.30 10.70 C 5.40 9.70 3.70 9.35 2.20 9.20 Q 0.50 8.50 2.20 7.80 C 3.70 7.65 5.40 7.30 6.30 6.30Z" fill="none" stroke="#d5d8df" stroke-width="1.3" stroke-linejoin="round"/></svg>
<svg style="position:absolute;left:357.7px;top:924.9px;overflow:visible;" width="16" height="16" viewBox="0 0 16 16"><g fill="none" stroke="#d5d8df" stroke-width="1.35" stroke-linecap="round" stroke-linejoin="round"><path d="M8.4 0.9 C12.4 0.9 15 3.7 15 7.3 C15 10.9 12.3 13.7 8.4 13.7 C7.2 13.7 6.2 13.4 5.2 13 L1.1 14.6 L2.4 11 C1.9 9.9 1.7 8.6 1.7 7.3 C1.7 3.7 4.4 0.9 8.4 0.9Z"/><line x1="8.4" y1="4.4" x2="8.4" y2="10.2"/><line x1="5.5" y1="7.3" x2="11.3" y2="7.3"/></g></svg>
<svg style="position:absolute;left:403.8px;top:921.8px;overflow:visible;" width="22.4" height="22.4" viewBox="0 0 24 24"><defs><clipPath id="cw20"><circle cx="12" cy="12" r="12"/></clipPath></defs><g clip-path="url(#cw20)"><rect width="24" height="24" fill="#9cba8e"/><path d="M3 24 C3.5 19.5 6 17 9.5 16 C12 15.4 15.5 15.5 18.5 16.6 C21 17.6 22 20 22.5 24Z" fill="#d4bb95"/><path d="M15 17 C17 17 18.5 18.5 19 20.5 L15.5 22Z" fill="#e6dcc8"/><path d="M9.6 6.2 C10.6 4.9 13.8 4.8 15.2 6.8 C16.2 8.4 15.8 11 15.2 12.6 L13.6 14.2 C12.8 16.2 12.8 20.2 13.2 24 L8.4 24 C7.8 20.2 7.4 17 7.9 14 C8.4 11 8.5 8 9.6 6.2Z" fill="#5b3222"/><ellipse cx="13" cy="10.6" rx="2.3" ry="3.1" fill="#d9a486"/></g></svg>
<div style="position:absolute;left:440.3px;top:927.70px;font-size:12.4px;line-height:12.4px;color:#d5d8df;font-weight:400;letter-spacing:0px;white-space:nowrap;transform:scaleX(0.9296);transform-origin:0 0;">2 weeks ago</div>
<svg style="position:absolute;left:549.8px;top:921.5px;overflow:visible;" width="24" height="24" viewBox="0 0 24 24"><g fill="none" stroke="#d5d8df" stroke-width="1.2"><circle cx="12" cy="12" r="11.1"/><circle cx="11.6" cy="9.9" r="4.2"/><path d="M4.6 19.7 C6.2 16.8 8.8 15.3 11.7 15.3 C14.6 15.3 17.2 16.8 18.8 19.7"/></g></svg>
<svg style="position:absolute;left:637.7px;top:921.5px;overflow:visible;" width="24" height="24" viewBox="0 0 24 24"><g fill="none" stroke="#d5d8df" stroke-width="1.2"><circle cx="12" cy="12" r="11.1"/><circle cx="11.6" cy="9.9" r="4.2"/><path d="M4.6 19.7 C6.2 16.8 8.8 15.3 11.7 15.3 C14.6 15.3 17.2 16.8 18.8 19.7"/></g></svg>
<svg style="position:absolute;left:725.6px;top:921.5px;overflow:visible;" width="24" height="24" viewBox="0 0 24 24"><g fill="none" stroke="#d5d8df" stroke-width="1.2"><circle cx="12" cy="12" r="11.1"/><circle cx="11.6" cy="9.9" r="4.2"/><path d="M4.6 19.7 C6.2 16.8 8.8 15.3 11.7 15.3 C14.6 15.3 17.2 16.8 18.8 19.7"/></g></svg>
<div style="position:absolute;left:782px;top:918px;width:124px;height:31px;background:#ffd533;"></div>
<div style="position:absolute;left:782px;width:124px;top:927.19px;font-size:12.3px;line-height:12.3px;color:#ffffff;font-weight:400;letter-spacing:0.267px;white-space:nowrap;text-align:center;">Todo</div>
<div style="position:absolute;left:1075px;width:126px;top:927.19px;font-size:12.3px;line-height:12.3px;color:#d5d8df;font-weight:400;letter-spacing:0px;white-space:nowrap;text-align:center;transform:scaleX(0.9530);transform-origin:50% 0;">4 days</div>
<div style="position:absolute;left:1718.4px;top:923.3px;width:96.6px;height:20.5px;border-radius:10.25px;background:#c4c4c4;"></div>
<div style="position:absolute;left:1764px;top:933px;width:4.5px;height:1.2px;background:#f4f4f4;"></div>
<svg style="position:absolute;left:1884.7px;top:923.0px;overflow:visible;" width="15" height="20" viewBox="0 0 15 20"><path d="M2.6 0.6 L9.6 0.6 L14.4 5.6 L14.4 17 C14.4 18.5 13.5 19.4 12 19.4 L2.6 19.4 C1.3 19.4 0.6 18.6 0.6 17.2 L0.6 2.8 C0.6 1.4 1.3 0.6 2.6 0.6Z" fill="none" stroke="#d5d8df" stroke-width="1.2"/><g stroke="#d5d8df" stroke-width="1.9" stroke-linecap="round"><line x1="3.7" y1="12.2" x2="5.6" y2="9"/><line x1="6.6" y1="12.2" x2="8.5" y2="9"/></g><circle cx="10.7" cy="11.8" r="1.05" fill="#d5d8df"/></svg>
<div style="position:absolute;left:50px;top:958px;width:15px;height:15px;border:1px solid #74778e;border-radius:3px;box-sizing:border-box;"></div>
<div style="position:absolute;left:103.6px;top:960.39px;font-size:12.3px;line-height:12.3px;color:#d5d8df;font-weight:400;letter-spacing:0.257px;white-space:nowrap;">Meeting 1st production</div>
<svg style="position:absolute;left:327.0px;top:956.1px;overflow:visible;" width="17" height="17" viewBox="0 0 17 17"><path d="M6.30 6.30 C 7.30 5.40 7.65 3.70 7.80 2.20 Q 8.50 0.50 9.20 2.20 C 9.35 3.70 9.70 5.40 10.70 6.30 C 11.60 7.30 13.30 7.65 14.80 7.80 Q 16.50 8.50 14.80 9.20 C 13.30 9.35 11.60 9.70 10.70 10.70 C 9.70 11.60 9.35 13.30 9.20 14.80 Q 8.50 16.50 7.80 14.80 C 7.65 13.30 7.30 11.60 6.30 10.70 C 5.40 9.70 3.70 9.35 2.20 9.20 Q 0.50 8.50 2.20 7.80 C 3.70 7.65 5.40 7.30 6.30 6.30Z" fill="none" stroke="#d5d8df" stroke-width="1.3" stroke-linejoin="round"/></svg>
<svg style="position:absolute;left:357.7px;top:956.9px;overflow:visible;" width="16" height="16" viewBox="0 0 16 16"><g fill="none" stroke="#d5d8df" stroke-width="1.35" stroke-linecap="round" stroke-linejoin="round"><path d="M8.4 0.9 C12.4 0.9 15 3.7 15 7.3 C15 10.9 12.3 13.7 8.4 13.7 C7.2 13.7 6.2 13.4 5.2 13 L1.1 14.6 L2.4 11 C1.9 9.9 1.7 8.6 1.7 7.3 C1.7 3.7 4.4 0.9 8.4 0.9Z"/><line x1="8.4" y1="4.4" x2="8.4" y2="10.2"/><line x1="5.5" y1="7.3" x2="11.3" y2="7.3"/></g></svg>
<svg style="position:absolute;left:403.8px;top:953.8px;overflow:visible;" width="22.4" height="22.4" viewBox="0 0 24 24"><defs><clipPath id="cw21"><circle cx="12" cy="12" r="12"/></clipPath></defs><g clip-path="url(#cw21)"><rect width="24" height="24" fill="#9cba8e"/><path d="M3 24 C3.5 19.5 6 17 9.5 16 C12 15.4 15.5 15.5 18.5 16.6 C21 17.6 22 20 22.5 24Z" fill="#d4bb95"/><path d="M15 17 C17 17 18.5 18.5 19 20.5 L15.5 22Z" fill="#e6dcc8"/><path d="M9.6 6.2 C10.6 4.9 13.8 4.8 15.2 6.8 C16.2 8.4 15.8 11 15.2 12.6 L13.6 14.2 C12.8 16.2 12.8 20.2 13.2 24 L8.4 24 C7.8 20.2 7.4 17 7.9 14 C8.4 11 8.5 8 9.6 6.2Z" fill="#5b3222"/><ellipse cx="13" cy="10.6" rx="2.3" ry="3.1" fill="#d9a486"/></g></svg>
<div style="position:absolute;left:440.3px;top:959.70px;font-size:12.4px;line-height:12.4px;color:#d5d8df;font-weight:400;letter-spacing:0px;white-space:nowrap;transform:scaleX(0.9296);transform-origin:0 0;">2 weeks ago</div>
<svg style="position:absolute;left:549.8px;top:953.5px;overflow:visible;" width="24" height="24" viewBox="0 0 24 24"><g fill="none" stroke="#d5d8df" stroke-width="1.2"><circle cx="12" cy="12" r="11.1"/><circle cx="11.6" cy="9.9" r="4.2"/><path d="M4.6 19.7 C6.2 16.8 8.8 15.3 11.7 15.3 C14.6 15.3 17.2 16.8 18.8 19.7"/></g></svg>
<svg style="position:absolute;left:637.7px;top:953.5px;overflow:visible;" width="24" height="24" viewBox="0 0 24 24"><g fill="none" stroke="#d5d8df" stroke-width="1.2"><circle cx="12" cy="12" r="11.1"/><circle cx="11.6" cy="9.9" r="4.2"/><path d="M4.6 19.7 C6.2 16.8 8.8 15.3 11.7 15.3 C14.6 15.3 17.2 16.8 18.8 19.7"/></g></svg>
<svg style="position:absolute;left:725.6px;top:953.5px;overflow:visible;" width="24" height="24" viewBox="0 0 24 24"><g fill="none" stroke="#d5d8df" stroke-width="1.2"><circle cx="12" cy="12" r="11.1"/><circle cx="11.6" cy="9.9" r="4.2"/><path d="M4.6 19.7 C6.2 16.8 8.8 15.3 11.7 15.3 C14.6 15.3 17.2 16.8 18.8 19.7"/></g></svg>
<div style="position:absolute;left:782px;top:950px;width:124px;height:31px;background:#ffd533;"></div>
<div style="position:absolute;left:782px;width:124px;top:959.19px;font-size:12.3px;line-height:12.3px;color:#ffffff;font-weight:400;letter-spacing:0.267px;white-space:nowrap;text-align:center;">Todo</div>
<div style="position:absolute;left:918.4px;top:955.1px;width:145.4px;height:20px;border-radius:3px;background:#133a7f;box-shadow:0 0 0 1px #0d2452;"></div>
<div style="position:absolute;left:926.3px;top:959.39px;font-size:12.3px;line-height:12.3px;color:#d5d8df;font-weight:400;letter-spacing:0.088px;white-space:nowrap;">Digital Proof (printed ...</div>
<div style="position:absolute;left:1075px;width:126px;top:959.19px;font-size:12.3px;line-height:12.3px;color:#d5d8df;font-weight:400;letter-spacing:0px;white-space:nowrap;text-align:center;transform:scaleX(0.9530);transform-origin:50% 0;">1 days</div>
<div style="position:absolute;left:1718.4px;top:955.3px;width:96.6px;height:20.5px;border-radius:10.25px;background:#c4c4c4;"></div>
<div style="position:absolute;left:1764px;top:965px;width:4.5px;height:1.2px;background:#f4f4f4;"></div>
<svg style="position:absolute;left:1884.7px;top:955.0px;overflow:visible;" width="15" height="20" viewBox="0 0 15 20"><path d="M2.6 0.6 L9.6 0.6 L14.4 5.6 L14.4 17 C14.4 18.5 13.5 19.4 12 19.4 L2.6 19.4 C1.3 19.4 0.6 18.6 0.6 17.2 L0.6 2.8 C0.6 1.4 1.3 0.6 2.6 0.6Z" fill="none" stroke="#d5d8df" stroke-width="1.2"/><g stroke="#d5d8df" stroke-width="1.9" stroke-linecap="round"><line x1="3.7" y1="12.2" x2="5.6" y2="9"/><line x1="6.6" y1="12.2" x2="8.5" y2="9"/></g><circle cx="10.7" cy="11.8" r="1.05" fill="#d5d8df"/></svg>
<div style="position:absolute;left:50px;top:990px;width:15px;height:15px;border:1px solid #74778e;border-radius:3px;box-sizing:border-box;"></div>
<div style="position:absolute;left:103.6px;top:992.39px;font-size:12.3px;line-height:12.3px;color:#d5d8df;font-weight:400;letter-spacing:0.167px;white-space:nowrap;">Direct Labour</div>
<svg style="position:absolute;left:327.0px;top:988.1px;overflow:visible;" width="17" height="17" viewBox="0 0 17 17"><path d="M6.30 6.30 C 7.30 5.40 7.65 3.70 7.80 2.20 Q 8.50 0.50 9.20 2.20 C 9.35 3.70 9.70 5.40 10.70 6.30 C 11.60 7.30 13.30 7.65 14.80 7.80 Q 16.50 8.50 14.80 9.20 C 13.30 9.35 11.60 9.70 10.70 10.70 C 9.70 11.60 9.35 13.30 9.20 14.80 Q 8.50 16.50 7.80 14.80 C 7.65 13.30 7.30 11.60 6.30 10.70 C 5.40 9.70 3.70 9.35 2.20 9.20 Q 0.50 8.50 2.20 7.80 C 3.70 7.65 5.40 7.30 6.30 6.30Z" fill="none" stroke="#d5d8df" stroke-width="1.3" stroke-linejoin="round"/></svg>
<svg style="position:absolute;left:357.7px;top:988.9px;overflow:visible;" width="16" height="16" viewBox="0 0 16 16"><g fill="none" stroke="#d5d8df" stroke-width="1.35" stroke-linecap="round" stroke-linejoin="round"><path d="M8.4 0.9 C12.4 0.9 15 3.7 15 7.3 C15 10.9 12.3 13.7 8.4 13.7 C7.2 13.7 6.2 13.4 5.2 13 L1.1 14.6 L2.4 11 C1.9 9.9 1.7 8.6 1.7 7.3 C1.7 3.7 4.4 0.9 8.4 0.9Z"/><line x1="8.4" y1="4.4" x2="8.4" y2="10.2"/><line x1="5.5" y1="7.3" x2="11.3" y2="7.3"/></g></svg>
<svg style="position:absolute;left:403.8px;top:985.8px;overflow:visible;" width="22.4" height="22.4" viewBox="0 0 24 24"><defs><clipPath id="cw22"><circle cx="12" cy="12" r="12"/></clipPath></defs><g clip-path="url(#cw22)"><rect width="24" height="24" fill="#9cba8e"/><path d="M3 24 C3.5 19.5 6 17 9.5 16 C12 15.4 15.5 15.5 18.5 16.6 C21 17.6 22 20 22.5 24Z" fill="#d4bb95"/><path d="M15 17 C17 17 18.5 18.5 19 20.5 L15.5 22Z" fill="#e6dcc8"/><path d="M9.6 6.2 C10.6 4.9 13.8 4.8 15.2 6.8 C16.2 8.4 15.8 11 15.2 12.6 L13.6 14.2 C12.8 16.2 12.8 20.2 13.2 24 L8.4 24 C7.8 20.2 7.4 17 7.9 14 C8.4 11 8.5 8 9.6 6.2Z" fill="#5b3222"/><ellipse cx="13" cy="10.6" rx="2.3" ry="3.1" fill="#d9a486"/></g></svg>
<div style="position:absolute;left:440.3px;top:991.70px;font-size:12.4px;line-height:12.4px;color:#d5d8df;font-weight:400;letter-spacing:0px;white-space:nowrap;transform:scaleX(0.9296);transform-origin:0 0;">2 weeks ago</div>
<svg style="position:absolute;left:549.8px;top:985.5px;overflow:visible;" width="24" height="24" viewBox="0 0 24 24"><g fill="none" stroke="#d5d8df" stroke-width="1.2"><circle cx="12" cy="12" r="11.1"/><circle cx="11.6" cy="9.9" r="4.2"/><path d="M4.6 19.7 C6.2 16.8 8.8 15.3 11.7 15.3 C14.6 15.3 17.2 16.8 18.8 19.7"/></g></svg>
<svg style="position:absolute;left:637.7px;top:985.5px;overflow:visible;" width="24" height="24" viewBox="0 0 24 24"><g fill="none" stroke="#d5d8df" stroke-width="1.2"><circle cx="12" cy="12" r="11.1"/><circle cx="11.6" cy="9.9" r="4.2"/><path d="M4.6 19.7 C6.2 16.8 8.8 15.3 11.7 15.3 C14.6 15.3 17.2 16.8 18.8 19.7"/></g></svg>
<svg style="position:absolute;left:725.6px;top:985.5px;overflow:visible;" width="24" height="24" viewBox="0 0 24 24"><g fill="none" stroke="#d5d8df" stroke-width="1.2"><circle cx="12" cy="12" r="11.1"/><circle cx="11.6" cy="9.9" r="4.2"/><path d="M4.6 19.7 C6.2 16.8 8.8 15.3 11.7 15.3 C14.6 15.3 17.2 16.8 18.8 19.7"/></g></svg>
<div style="position:absolute;left:782px;top:982px;width:124px;height:31px;background:#ffd533;"></div>
<div style="position:absolute;left:782px;width:124px;top:991.19px;font-size:12.3px;line-height:12.3px;color:#ffffff;font-weight:400;letter-spacing:0.267px;white-space:nowrap;text-align:center;">Todo</div>
<div style="position:absolute;left:1075px;width:126px;top:991.19px;font-size:12.3px;line-height:12.3px;color:#d5d8df;font-weight:400;letter-spacing:0px;white-space:nowrap;text-align:center;transform:scaleX(0.9530);transform-origin:50% 0;">1 days</div>
<div style="position:absolute;left:1718.4px;top:987.3px;width:96.6px;height:20.5px;border-radius:10.25px;background:#c4c4c4;"></div>
<div style="position:absolute;left:1764px;top:997px;width:4.5px;height:1.2px;background:#f4f4f4;"></div>
<svg style="position:absolute;left:1884.7px;top:987.0px;overflow:visible;" width="15" height="20" viewBox="0 0 15 20"><path d="M2.6 0.6 L9.6 0.6 L14.4 5.6 L14.4 17 C14.4 18.5 13.5 19.4 12 19.4 L2.6 19.4 C1.3 19.4 0.6 18.6 0.6 17.2 L0.6 2.8 C0.6 1.4 1.3 0.6 2.6 0.6Z" fill="none" stroke="#d5d8df" stroke-width="1.2"/><g stroke="#d5d8df" stroke-width="1.9" stroke-linecap="round"><line x1="3.7" y1="12.2" x2="5.6" y2="9"/><line x1="6.6" y1="12.2" x2="8.5" y2="9"/></g><circle cx="10.7" cy="11.8" r="1.05" fill="#d5d8df"/></svg>
<div style="position:absolute;left:50px;top:1022px;width:15px;height:15px;border:1px solid #74778e;border-radius:3px;box-sizing:border-box;"></div>
<div style="position:absolute;left:103.6px;top:1024.39px;font-size:12.3px;line-height:12.3px;color:#d5d8df;font-weight:400;letter-spacing:0.194px;white-space:nowrap;">Lay out Production</div>
<svg style="position:absolute;left:327.0px;top:1020.5999999999999px;overflow:visible;" width="17" height="17" viewBox="0 0 17 17"><path d="M6.30 6.30 C 7.30 5.40 7.65 3.70 7.80 2.20 Q 8.50 0.50 9.20 2.20 C 9.35 3.70 9.70 5.40 10.70 6.30 C 11.60 7.30 13.30 7.65 14.80 7.80 Q 16.50 8.50 14.80 9.20 C 13.30 9.35 11.60 9.70 10.70 10.70 C 9.70 11.60 9.35 13.30 9.20 14.80 Q 8.50 16.50 7.80 14.80 C 7.65 13.30 7.30 11.60 6.30 10.70 C 5.40 9.70 3.70 9.35 2.20 9.20 Q 0.50 8.50 2.20 7.80 C 3.70 7.65 5.40 7.30 6.30 6.30Z" fill="none" stroke="#d5d8df" stroke-width="1.3" stroke-linejoin="round"/></svg>
<svg style="position:absolute;left:357.7px;top:1021.4000000000001px;overflow:visible;" width="16" height="16" viewBox="0 0 16 16"><g fill="none" stroke="#d5d8df" stroke-width="1.35" stroke-linecap="round" stroke-linejoin="round"><path d="M8.4 0.9 C12.4 0.9 15 3.7 15 7.3 C15 10.9 12.3 13.7 8.4 13.7 C7.2 13.7 6.2 13.4 5.2 13 L1.1 14.6 L2.4 11 C1.9 9.9 1.7 8.6 1.7 7.3 C1.7 3.7 4.4 0.9 8.4 0.9Z"/><line x1="8.4" y1="4.4" x2="8.4" y2="10.2"/><line x1="5.5" y1="7.3" x2="11.3" y2="7.3"/></g></svg>
<svg style="position:absolute;left:403.8px;top:1018.3px;overflow:visible;" width="22.4" height="22.4" viewBox="0 0 24 24"><defs><clipPath id="cw23"><circle cx="12" cy="12" r="12"/></clipPath></defs><g clip-path="url(#cw23)"><rect width="24" height="24" fill="#9cba8e"/><path d="M3 24 C3.5 19.5 6 17 9.5 16 C12 15.4 15.5 15.5 18.5 16.6 C21 17.6 22 20 22.5 24Z" fill="#d4bb95"/><path d="M15 17 C17 17 18.5 18.5 19 20.5 L15.5 22Z" fill="#e6dcc8"/><path d="M9.6 6.2 C10.6 4.9 13.8 4.8 15.2 6.8 C16.2 8.4 15.8 11 15.2 12.6 L13.6 14.2 C12.8 16.2 12.8 20.2 13.2 24 L8.4 24 C7.8 20.2 7.4 17 7.9 14 C8.4 11 8.5 8 9.6 6.2Z" fill="#5b3222"/><ellipse cx="13" cy="10.6" rx="2.3" ry="3.1" fill="#d9a486"/></g></svg>
<div style="position:absolute;left:440.3px;top:1023.70px;font-size:12.4px;line-height:12.4px;color:#d5d8df;font-weight:400;letter-spacing:0px;white-space:nowrap;transform:scaleX(0.9296);transform-origin:0 0;">2 weeks ago</div>
<svg style="position:absolute;left:549.8px;top:1018.0px;overflow:visible;" width="24" height="24" viewBox="0 0 24 24"><g fill="none" stroke="#d5d8df" stroke-width="1.2"><circle cx="12" cy="12" r="11.1"/><circle cx="11.6" cy="9.9" r="4.2"/><path d="M4.6 19.7 C6.2 16.8 8.8 15.3 11.7 15.3 C14.6 15.3 17.2 16.8 18.8 19.7"/></g></svg>
<svg style="position:absolute;left:637.7px;top:1018.0px;overflow:visible;" width="24" height="24" viewBox="0 0 24 24"><g fill="none" stroke="#d5d8df" stroke-width="1.2"><circle cx="12" cy="12" r="11.1"/><circle cx="11.6" cy="9.9" r="4.2"/><path d="M4.6 19.7 C6.2 16.8 8.8 15.3 11.7 15.3 C14.6 15.3 17.2 16.8 18.8 19.7"/></g></svg>
<svg style="position:absolute;left:725.6px;top:1018.0px;overflow:visible;" width="24" height="24" viewBox="0 0 24 24"><g fill="none" stroke="#d5d8df" stroke-width="1.2"><circle cx="12" cy="12" r="11.1"/><circle cx="11.6" cy="9.9" r="4.2"/><path d="M4.6 19.7 C6.2 16.8 8.8 15.3 11.7 15.3 C14.6 15.3 17.2 16.8 18.8 19.7"/></g></svg>
<div style="position:absolute;left:782px;top:1014px;width:124px;height:32px;background:#ffd533;"></div>
<div style="position:absolute;left:782px;width:124px;top:1023.19px;font-size:12.3px;line-height:12.3px;color:#ffffff;font-weight:400;letter-spacing:0.267px;white-space:nowrap;text-align:center;">Todo</div>
<div style="position:absolute;left:1075px;width:126px;top:1023.19px;font-size:12.3px;line-height:12.3px;color:#d5d8df;font-weight:400;letter-spacing:0px;white-space:nowrap;text-align:center;transform:scaleX(0.9530);transform-origin:50% 0;">1 days</div>
<div style="position:absolute;left:1718.4px;top:1019.8px;width:96.6px;height:20.5px;border-radius:10.25px;background:#c4c4c4;"></div>
<div style="position:absolute;left:1764px;top:1030px;width:4.5px;height:1.2px;background:#f4f4f4;"></div>
<svg style="position:absolute;left:1884.7px;top:1019.5px;overflow:visible;" width="15" height="20" viewBox="0 0 15 20"><path d="M2.6 0.6 L9.6 0.6 L14.4 5.6 L14.4 17 C14.4 18.5 13.5 19.4 12 19.4 L2.6 19.4 C1.3 19.4 0.6 18.6 0.6 17.2 L0.6 2.8 C0.6 1.4 1.3 0.6 2.6 0.6Z" fill="none" stroke="#d5d8df" stroke-width="1.2"/><g stroke="#d5d8df" stroke-width="1.9" stroke-linecap="round"><line x1="3.7" y1="12.2" x2="5.6" y2="9"/><line x1="6.6" y1="12.2" x2="8.5" y2="9"/></g><circle cx="10.7" cy="11.8" r="1.05" fill="#d5d8df"/></svg>
<div style="position:absolute;left:50px;top:1055px;width:15px;height:15px;border:1px solid #74778e;border-radius:3px;box-sizing:border-box;"></div>
<div style="position:absolute;left:103.6px;top:1057.39px;font-size:12.3px;line-height:12.3px;color:#d5d8df;font-weight:400;letter-spacing:0.212px;white-space:nowrap;">Net WT Calculation</div>
<svg style="position:absolute;left:327.0px;top:1053.1px;overflow:visible;" width="17" height="17" viewBox="0 0 17 17"><path d="M6.30 6.30 C 7.30 5.40 7.65 3.70 7.80 2.20 Q 8.50 0.50 9.20 2.20 C 9.35 3.70 9.70 5.40 10.70 6.30 C 11.60 7.30 13.30 7.65 14.80 7.80 Q 16.50 8.50 14.80 9.20 C 13.30 9.35 11.60 9.70 10.70 10.70 C 9.70 11.60 9.35 13.30 9.20 14.80 Q 8.50 16.50 7.80 14.80 C 7.65 13.30 7.30 11.60 6.30 10.70 C 5.40 9.70 3.70 9.35 2.20 9.20 Q 0.50 8.50 2.20 7.80 C 3.70 7.65 5.40 7.30 6.30 6.30Z" fill="none" stroke="#d5d8df" stroke-width="1.3" stroke-linejoin="round"/></svg>
<svg style="position:absolute;left:357.7px;top:1053.9px;overflow:visible;" width="16" height="16" viewBox="0 0 16 16"><g fill="none" stroke="#d5d8df" stroke-width="1.35" stroke-linecap="round" stroke-linejoin="round"><path d="M8.4 0.9 C12.4 0.9 15 3.7 15 7.3 C15 10.9 12.3 13.7 8.4 13.7 C7.2 13.7 6.2 13.4 5.2 13 L1.1 14.6 L2.4 11 C1.9 9.9 1.7 8.6 1.7 7.3 C1.7 3.7 4.4 0.9 8.4 0.9Z"/><line x1="8.4" y1="4.4" x2="8.4" y2="10.2"/><line x1="5.5" y1="7.3" x2="11.3" y2="7.3"/></g></svg>
<svg style="position:absolute;left:403.8px;top:1050.8px;overflow:visible;" width="22.4" height="22.4" viewBox="0 0 24 24"><defs><clipPath id="cw24"><circle cx="12" cy="12" r="12"/></clipPath></defs><g clip-path="url(#cw24)"><rect width="24" height="24" fill="#9cba8e"/><path d="M3 24 C3.5 19.5 6 17 9.5 16 C12 15.4 15.5 15.5 18.5 16.6 C21 17.6 22 20 22.5 24Z" fill="#d4bb95"/><path d="M15 17 C17 17 18.5 18.5 19 20.5 L15.5 22Z" fill="#e6dcc8"/><path d="M9.6 6.2 C10.6 4.9 13.8 4.8 15.2 6.8 C16.2 8.4 15.8 11 15.2 12.6 L13.6 14.2 C12.8 16.2 12.8 20.2 13.2 24 L8.4 24 C7.8 20.2 7.4 17 7.9 14 C8.4 11 8.5 8 9.6 6.2Z" fill="#5b3222"/><ellipse cx="13" cy="10.6" rx="2.3" ry="3.1" fill="#d9a486"/></g></svg>
<div style="position:absolute;left:440.3px;top:1056.70px;font-size:12.4px;line-height:12.4px;color:#d5d8df;font-weight:400;letter-spacing:0px;white-space:nowrap;transform:scaleX(0.9296);transform-origin:0 0;">2 weeks ago</div>
<svg style="position:absolute;left:549.8px;top:1050.5px;overflow:visible;" width="24" height="24" viewBox="0 0 24 24"><g fill="none" stroke="#d5d8df" stroke-width="1.2"><circle cx="12" cy="12" r="11.1"/><circle cx="11.6" cy="9.9" r="4.2"/><path d="M4.6 19.7 C6.2 16.8 8.8 15.3 11.7 15.3 C14.6 15.3 17.2 16.8 18.8 19.7"/></g></svg>
<svg style="position:absolute;left:637.7px;top:1050.5px;overflow:visible;" width="24" height="24" viewBox="0 0 24 24"><g fill="none" stroke="#d5d8df" stroke-width="1.2"><circle cx="12" cy="12" r="11.1"/><circle cx="11.6" cy="9.9" r="4.2"/><path d="M4.6 19.7 C6.2 16.8 8.8 15.3 11.7 15.3 C14.6 15.3 17.2 16.8 18.8 19.7"/></g></svg>
<svg style="position:absolute;left:725.6px;top:1050.5px;overflow:visible;" width="24" height="24" viewBox="0 0 24 24"><g fill="none" stroke="#d5d8df" stroke-width="1.2"><circle cx="12" cy="12" r="11.1"/><circle cx="11.6" cy="9.9" r="4.2"/><path d="M4.6 19.7 C6.2 16.8 8.8 15.3 11.7 15.3 C14.6 15.3 17.2 16.8 18.8 19.7"/></g></svg>
<div style="position:absolute;left:782px;top:1047px;width:124px;height:31px;background:#ffd533;"></div>
<div style="position:absolute;left:782px;width:124px;top:1056.19px;font-size:12.3px;line-height:12.3px;color:#ffffff;font-weight:400;letter-spacing:0.267px;white-space:nowrap;text-align:center;">Todo</div>
<div style="position:absolute;left:1075px;width:126px;top:1056.19px;font-size:12.3px;line-height:12.3px;color:#d5d8df;font-weight:400;letter-spacing:0px;white-space:nowrap;text-align:center;transform:scaleX(0.9530);transform-origin:50% 0;">1 days</div>
<div style="position:absolute;left:1718.4px;top:1052.3px;width:96.6px;height:20.5px;border-radius:10.25px;background:#c4c4c4;"></div>
<div style="position:absolute;left:1764px;top:1062px;width:4.5px;height:1.2px;background:#f4f4f4;"></div>
<svg style="position:absolute;left:1884.7px;top:1052.0px;overflow:visible;" width="15" height="20" viewBox="0 0 15 20"><path d="M2.6 0.6 L9.6 0.6 L14.4 5.6 L14.4 17 C14.4 18.5 13.5 19.4 12 19.4 L2.6 19.4 C1.3 19.4 0.6 18.6 0.6 17.2 L0.6 2.8 C0.6 1.4 1.3 0.6 2.6 0.6Z" fill="none" stroke="#d5d8df" stroke-width="1.2"/><g stroke="#d5d8df" stroke-width="1.9" stroke-linecap="round"><line x1="3.7" y1="12.2" x2="5.6" y2="9"/><line x1="6.6" y1="12.2" x2="8.5" y2="9"/></g><circle cx="10.7" cy="11.8" r="1.05" fill="#d5d8df"/></svg>
<div style="position:absolute;left:50px;top:1087px;width:15px;height:15px;border:1px solid #74778e;border-radius:3px;box-sizing:border-box;"></div>
<div style="position:absolute;left:103.6px;top:1089.39px;font-size:12.3px;line-height:12.3px;color:#d5d8df;font-weight:400;letter-spacing:0.015px;white-space:nowrap;">Cape Pack Calculation</div>
<svg style="position:absolute;left:327.0px;top:1085.1px;overflow:visible;" width="17" height="17" viewBox="0 0 17 17"><path d="M6.30 6.30 C 7.30 5.40 7.65 3.70 7.80 2.20 Q 8.50 0.50 9.20 2.20 C 9.35 3.70 9.70 5.40 10.70 6.30 C 11.60 7.30 13.30 7.65 14.80 7.80 Q 16.50 8.50 14.80 9.20 C 13.30 9.35 11.60 9.70 10.70 10.70 C 9.70 11.60 9.35 13.30 9.20 14.80 Q 8.50 16.50 7.80 14.80 C 7.65 13.30 7.30 11.60 6.30 10.70 C 5.40 9.70 3.70 9.35 2.20 9.20 Q 0.50 8.50 2.20 7.80 C 3.70 7.65 5.40 7.30 6.30 6.30Z" fill="none" stroke="#d5d8df" stroke-width="1.3" stroke-linejoin="round"/></svg>
<svg style="position:absolute;left:357.7px;top:1085.9px;overflow:visible;" width="16" height="16" viewBox="0 0 16 16"><g fill="none" stroke="#d5d8df" stroke-width="1.35" stroke-linecap="round" stroke-linejoin="round"><path d="M8.4 0.9 C12.4 0.9 15 3.7 15 7.3 C15 10.9 12.3 13.7 8.4 13.7 C7.2 13.7 6.2 13.4 5.2 13 L1.1 14.6 L2.4 11 C1.9 9.9 1.7 8.6 1.7 7.3 C1.7 3.7 4.4 0.9 8.4 0.9Z"/><line x1="8.4" y1="4.4" x2="8.4" y2="10.2"/><line x1="5.5" y1="7.3" x2="11.3" y2="7.3"/></g></svg>
<svg style="position:absolute;left:403.8px;top:1082.8px;overflow:visible;" width="22.4" height="22.4" viewBox="0 0 24 24"><defs><clipPath id="cw25"><circle cx="12" cy="12" r="12"/></clipPath></defs><g clip-path="url(#cw25)"><rect width="24" height="24" fill="#9cba8e"/><path d="M3 24 C3.5 19.5 6 17 9.5 16 C12 15.4 15.5 15.5 18.5 16.6 C21 17.6 22 20 22.5 24Z" fill="#d4bb95"/><path d="M15 17 C17 17 18.5 18.5 19 20.5 L15.5 22Z" fill="#e6dcc8"/><path d="M9.6 6.2 C10.6 4.9 13.8 4.8 15.2 6.8 C16.2 8.4 15.8 11 15.2 12.6 L13.6 14.2 C12.8 16.2 12.8 20.2 13.2 24 L8.4 24 C7.8 20.2 7.4 17 7.9 14 C8.4 11 8.5 8 9.6 6.2Z" fill="#5b3222"/><ellipse cx="13" cy="10.6" rx="2.3" ry="3.1" fill="#d9a486"/></g></svg>
<div style="position:absolute;left:440.3px;top:1088.70px;font-size:12.4px;line-height:12.4px;color:#d5d8df;font-weight:400;letter-spacing:0px;white-space:nowrap;transform:scaleX(0.9296);transform-origin:0 0;">2 weeks ago</div>
<svg style="position:absolute;left:549.8px;top:1082.5px;overflow:visible;" width="24" height="24" viewBox="0 0 24 24"><g fill="none" stroke="#d5d8df" stroke-width="1.2"><circle cx="12" cy="12" r="11.1"/><circle cx="11.6" cy="9.9" r="4.2"/><path d="M4.6 19.7 C6.2 16.8 8.8 15.3 11.7 15.3 C14.6 15.3 17.2 16.8 18.8 19.7"/></g></svg>
<svg style="position:absolute;left:637.7px;top:1082.5px;overflow:visible;" width="24" height="24" viewBox="0 0 24 24"><g fill="none" stroke="#d5d8df" stroke-width="1.2"><circle cx="12" cy="12" r="11.1"/><circle cx="11.6" cy="9.9" r="4.2"/><path d="M4.6 19.7 C6.2 16.8 8.8 15.3 11.7 15.3 C14.6 15.3 17.2 16.8 18.8 19.7"/></g></svg>
<svg style="position:absolute;left:725.6px;top:1082.5px;overflow:visible;" width="24" height="24" viewBox="0 0 24 24"><g fill="none" stroke="#d5d8df" stroke-width="1.2"><circle cx="12" cy="12" r="11.1"/><circle cx="11.6" cy="9.9" r="4.2"/><path d="M4.6 19.7 C6.2 16.8 8.8 15.3 11.7 15.3 C14.6 15.3 17.2 16.8 18.8 19.7"/></g></svg>
<div style="position:absolute;left:782px;top:1079px;width:124px;height:31px;background:#ffd533;"></div>
<div style="position:absolute;left:782px;width:124px;top:1088.19px;font-size:12.3px;line-height:12.3px;color:#ffffff;font-weight:400;letter-spacing:0.267px;white-space:nowrap;text-align:center;">Todo</div>
<div style="position:absolute;left:1075px;width:126px;top:1088.19px;font-size:12.3px;line-height:12.3px;color:#d5d8df;font-weight:400;letter-spacing:0px;white-space:nowrap;text-align:center;transform:scaleX(0.9530);transform-origin:50% 0;">2 days</div>
<div style="position:absolute;left:1718.4px;top:1084.3px;width:96.6px;height:20.5px;border-radius:10.25px;background:#c4c4c4;"></div>
<div style="position:absolute;left:1764px;top:1094px;width:4.5px;height:1.2px;background:#f4f4f4;"></div>
<svg style="position:absolute;left:1884.7px;top:1084.0px;overflow:visible;" width="15" height="20" viewBox="0 0 15 20"><path d="M2.6 0.6 L9.6 0.6 L14.4 5.6 L14.4 17 C14.4 18.5 13.5 19.4 12 19.4 L2.6 19.4 C1.3 19.4 0.6 18.6 0.6 17.2 L0.6 2.8 C0.6 1.4 1.3 0.6 2.6 0.6Z" fill="none" stroke="#d5d8df" stroke-width="1.2"/><g stroke="#d5d8df" stroke-width="1.9" stroke-linecap="round"><line x1="3.7" y1="12.2" x2="5.6" y2="9"/><line x1="6.6" y1="12.2" x2="8.5" y2="9"/></g><circle cx="10.7" cy="11.8" r="1.05" fill="#d5d8df"/></svg>
<div style="position:absolute;left:50px;top:1119px;width:15px;height:15px;border:1px solid #5a5d75;border-radius:3px;box-sizing:border-box;"></div>
<div style="position:absolute;left:103.6px;top:1120.59px;font-size:12.3px;line-height:12.3px;color:#d5d8df;font-weight:400;letter-spacing:0.244px;white-space:nowrap;">+ Add task</div>
<div style="position:absolute;left:1849px;top:1124px;width:199px;height:11px;background:#181b34;"></div>
<div style="position:absolute;left:2px;top:1124px;width:1847px;height:11px;background:#7e8196;"></div>
<div style="position:absolute;left:1968px;top:1086px;width:63px;height:30px;border-radius:15px;background:#0073ea;box-shadow:0 2px 6px rgba(0,0,0,0.35);"></div>
<div style="position:absolute;left:1984.3px;top:1093.64px;font-size:14.6px;line-height:14.6px;color:#ffffff;font-weight:400;letter-spacing:0.4px;white-space:nowrap;">Help</div>
</div></body></html>
